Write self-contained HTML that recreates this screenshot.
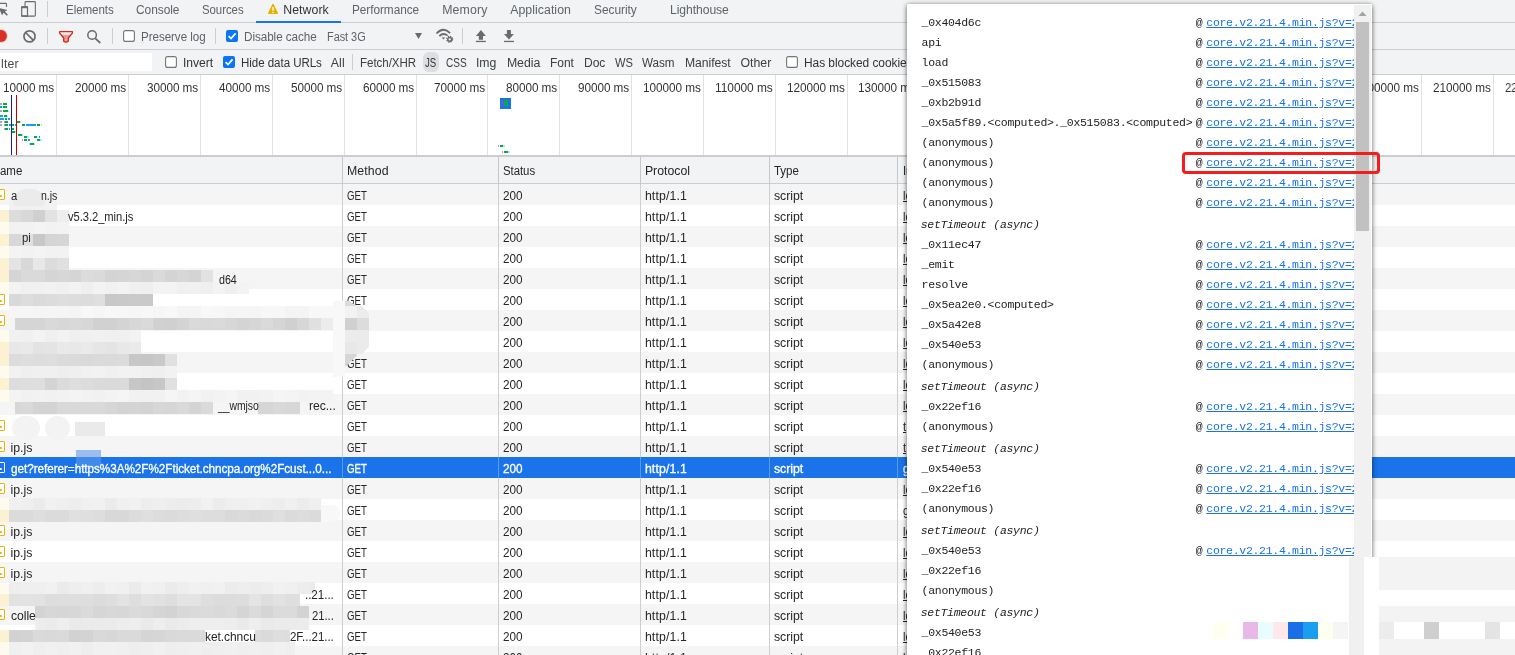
<!DOCTYPE html><html><head><meta charset="utf-8"><title>DevTools</title><style>
html,body{margin:0;padding:0}
body{width:1515px;height:655px;overflow:hidden;position:relative;background:#fff;font-family:'Liberation Sans',sans-serif;}
#r{position:absolute;left:0;top:0;width:1515px;height:655px;overflow:hidden}
#r div,#r span,#r svg{position:absolute;display:block}
#r span{white-space:pre;line-height:16px;}
#r .g{left:0;top:0;width:1515px;height:655px;will-change:transform;}
#r .pw{left:907px;top:4px;width:465px;height:660px;background:#fff;will-change:transform;}
#r .pi{left:-907px;top:-4px;width:1515px;height:655px}

</style></head><body><div id="r">
<!-- bg -->
<div style="left:0px;top:0px;width:1515px;height:22px;background:#f1f3f4;"></div>
<div style="left:0px;top:22px;width:1515px;height:1px;background:#cacdd1;"></div>
<div style="left:0px;top:23px;width:1515px;height:26px;background:#f1f3f4;"></div>
<div style="left:0px;top:49px;width:1515px;height:1px;background:#cacdd1;"></div>
<div style="left:0px;top:50px;width:1515px;height:24px;background:#f1f3f4;"></div>
<div style="left:0px;top:74px;width:1515px;height:1px;background:#cacdd1;"></div>
<div style="left:0px;top:75px;width:1515px;height:80px;background:#fff;"></div>
<div style="left:56px;top:75px;width:1px;height:80px;background:#e1e1e1;"></div>
<div style="left:128px;top:75px;width:1px;height:80px;background:#e1e1e1;"></div>
<div style="left:200px;top:75px;width:1px;height:80px;background:#e1e1e1;"></div>
<div style="left:272px;top:75px;width:1px;height:80px;background:#e1e1e1;"></div>
<div style="left:344px;top:75px;width:1px;height:80px;background:#e1e1e1;"></div>
<div style="left:416px;top:75px;width:1px;height:80px;background:#e1e1e1;"></div>
<div style="left:487px;top:75px;width:1px;height:80px;background:#e1e1e1;"></div>
<div style="left:559px;top:75px;width:1px;height:80px;background:#e1e1e1;"></div>
<div style="left:631px;top:75px;width:1px;height:80px;background:#e1e1e1;"></div>
<div style="left:703px;top:75px;width:1px;height:80px;background:#e1e1e1;"></div>
<div style="left:775px;top:75px;width:1px;height:80px;background:#e1e1e1;"></div>
<div style="left:847px;top:75px;width:1px;height:80px;background:#e1e1e1;"></div>
<div style="left:918px;top:75px;width:1px;height:80px;background:#e1e1e1;"></div>
<div style="left:990px;top:75px;width:1px;height:80px;background:#e1e1e1;"></div>
<div style="left:1062px;top:75px;width:1px;height:80px;background:#e1e1e1;"></div>
<div style="left:1134px;top:75px;width:1px;height:80px;background:#e1e1e1;"></div>
<div style="left:1206px;top:75px;width:1px;height:80px;background:#e1e1e1;"></div>
<div style="left:1277px;top:75px;width:1px;height:80px;background:#e1e1e1;"></div>
<div style="left:1349px;top:75px;width:1px;height:80px;background:#e1e1e1;"></div>
<div style="left:1421px;top:75px;width:1px;height:80px;background:#e1e1e1;"></div>
<div style="left:1493px;top:75px;width:1px;height:80px;background:#e1e1e1;"></div>
<div style="left:0px;top:155px;width:1515px;height:2px;background:#cbcdd1;"></div>
<div style="left:0px;top:157px;width:1515px;height:26px;background:#f1f3f4;"></div>
<div style="left:0px;top:183px;width:1515px;height:1px;background:#cacdd1;"></div>
<div style="left:0px;top:184px;width:1515px;height:21px;background:#f5f5f5;"></div>
<div style="left:0px;top:205px;width:1515px;height:21px;background:#fff;"></div>
<div style="left:0px;top:226px;width:1515px;height:21px;background:#f5f5f5;"></div>
<div style="left:0px;top:247px;width:1515px;height:21px;background:#fff;"></div>
<div style="left:0px;top:268px;width:1515px;height:21px;background:#f5f5f5;"></div>
<div style="left:0px;top:289px;width:1515px;height:21px;background:#fff;"></div>
<div style="left:0px;top:310px;width:1515px;height:21px;background:#f5f5f5;"></div>
<div style="left:0px;top:331px;width:1515px;height:21px;background:#fff;"></div>
<div style="left:0px;top:352px;width:1515px;height:21px;background:#f5f5f5;"></div>
<div style="left:0px;top:373px;width:1515px;height:21px;background:#fff;"></div>
<div style="left:0px;top:394px;width:1515px;height:21px;background:#f5f5f5;"></div>
<div style="left:0px;top:415px;width:1515px;height:21px;background:#fff;"></div>
<div style="left:0px;top:436px;width:1515px;height:21px;background:#f5f5f5;"></div>
<div style="left:0px;top:457px;width:1515px;height:21px;background:#1a73e8;"></div>
<div style="left:0px;top:478px;width:1515px;height:21px;background:#f5f5f5;"></div>
<div style="left:0px;top:499px;width:1515px;height:21px;background:#fff;"></div>
<div style="left:0px;top:520px;width:1515px;height:21px;background:#f5f5f5;"></div>
<div style="left:0px;top:541px;width:1515px;height:21px;background:#fff;"></div>
<div style="left:0px;top:562px;width:1515px;height:21px;background:#f5f5f5;"></div>
<div style="left:0px;top:583px;width:1515px;height:21px;background:#fff;"></div>
<div style="left:0px;top:604px;width:1515px;height:21px;background:#f5f5f5;"></div>
<div style="left:0px;top:625px;width:1515px;height:21px;background:#fff;"></div>
<div style="left:0px;top:646px;width:1515px;height:21px;background:#f5f5f5;"></div>
<div style="left:342px;top:157px;width:1px;height:27px;background:#c4c7cc;"></div>
<div style="left:342px;top:184px;width:1px;height:471px;background:#cbced4;"></div>
<div style="left:342px;top:457px;width:1px;height:21px;background:#5a9bef;"></div>
<div style="left:498px;top:157px;width:1px;height:27px;background:#c4c7cc;"></div>
<div style="left:498px;top:184px;width:1px;height:471px;background:#cbced4;"></div>
<div style="left:498px;top:457px;width:1px;height:21px;background:#5a9bef;"></div>
<div style="left:640px;top:157px;width:1px;height:27px;background:#c4c7cc;"></div>
<div style="left:640px;top:184px;width:1px;height:471px;background:#cbced4;"></div>
<div style="left:640px;top:457px;width:1px;height:21px;background:#5a9bef;"></div>
<div style="left:769px;top:157px;width:1px;height:27px;background:#c4c7cc;"></div>
<div style="left:769px;top:184px;width:1px;height:471px;background:#cbced4;"></div>
<div style="left:769px;top:457px;width:1px;height:21px;background:#5a9bef;"></div>
<div style="left:897px;top:157px;width:1px;height:27px;background:#c4c7cc;"></div>
<div style="left:897px;top:184px;width:1px;height:471px;background:#cbced4;"></div>
<div style="left:897px;top:457px;width:1px;height:21px;background:#5a9bef;"></div>
<div style="left:256px;top:21px;width:85px;height:2px;background:#1a73e8;"></div>
<div style="left:47px;top:1px;width:1px;height:16px;background:#cacdd1;"></div>
<svg style="left:0px;top:0px;" width="12" height="20" viewBox="0 0 12 20"><path d="M0 8.2 L7.4 9.9 L4.9 11.5 L7.9 14.8 L6.8 15.8 L3.7 12.7 L2 15.2 L0 10.5 Z" fill="#6b6b6b"/><path d="M0 3.4 H5.6 Q6.5 3.4 6.5 4.3 V7" fill="none" stroke="#6b6b6b" stroke-width="1.1"/></svg>
<svg style="left:20px;top:0px;" width="18" height="18" viewBox="0 0 18 18"><rect x="5.05" y="1.65" width="10.3" height="14.5" rx="0.9" fill="none" stroke="#6b6b6b" stroke-width="1.1"/><rect x="1.7" y="6.8" width="5.8" height="9.3" rx="0.6" fill="#f1f3f4" stroke="#6b6b6b" stroke-width="1.2"/><rect x="1.2" y="6.3" width="6.8" height="1.9" fill="#6b6b6b"/><rect x="1.2" y="15.3" width="6.8" height="1.4" fill="#6b6b6b"/></svg>
<svg style="left:267px;top:3px;" width="12" height="12" viewBox="0 0 12 12"><path d="M6 0.8 Q6.5 0.8 6.8 1.5 L10.9 10 Q11.2 11 10.3 11 H1.7 Q0.8 11 1.1 10 L5.2 1.5 Q5.5 0.8 6 0.8Z" fill="#eab000"/><rect x="5.25" y="4.1" width="1.5" height="3.8" fill="#fff"/><rect x="5.25" y="9.1" width="1.5" height="1" fill="#fff"/></svg>
<div style="left:47px;top:28px;width:1px;height:16px;background:#cacdd1;"></div>
<div style="left:112px;top:28px;width:1px;height:16px;background:#cacdd1;"></div>
<div style="left:215px;top:28px;width:1px;height:16px;background:#cacdd1;"></div>
<div style="left:462px;top:28px;width:1px;height:16px;background:#cacdd1;"></div>
<svg style="left:0px;top:27px;" width="10" height="18" viewBox="0 0 10 18"><circle cx="1.0" cy="9.0" r="6.9" fill="#d93025" opacity="0.22"/><circle cx="1.0" cy="9.0" r="5.9" fill="#d93025"/></svg>
<svg style="left:22px;top:29px;" width="16" height="16" viewBox="0 0 16 16"><circle cx="7.5" cy="7.4" r="5.55" fill="none" stroke="#6b6b6b" stroke-width="1.7"/><path d="M3.6 3.5 L11.4 11.3" stroke="#6b6b6b" stroke-width="1.7"/></svg>
<svg style="left:58px;top:30px;" width="17" height="14" viewBox="0 0 17 14"><path d="M3.4 4.7 H12.6 L10.3 8 V11.3 Q8 13 5.7 11.3 V8 Z" fill="#e89a94"/><path d="M1.65 1.7 H14.35 V3.2 L10.3 8 V11.3 Q8 13 5.7 11.3 V8 L1.65 3.2 Z" fill="none" stroke="#dc2418" stroke-width="1.3" stroke-linejoin="round"/></svg>
<svg style="left:86px;top:29px;" width="16" height="16" viewBox="0 0 16 16"><circle cx="6.1" cy="6.05" r="4.3" fill="none" stroke="#6a6a6a" stroke-width="1.5"/><path d="M9.3 9.4 L14.3 14.0" stroke="#6a6a6a" stroke-width="1.7"/></svg>
<svg style="left:123px;top:30px;" width="12" height="12" viewBox="0 0 12 12"><rect x="0.6" y="0.6" width="10.8" height="10.8" rx="2" fill="#fff" stroke="#767676" stroke-width="1.1"/></svg>
<svg style="left:226px;top:30px;" width="12" height="12" viewBox="0 0 12 12"><rect x="0" y="0" width="12" height="12" rx="2" fill="#0b75f8"/><path d="M2.6 6.2 L5 8.6 L9.6 3.4" fill="none" stroke="#fff" stroke-width="1.7"/></svg>
<svg style="left:414px;top:32px;" width="10" height="8" viewBox="0 0 10 8"><path d="M1 1 H8 L4.5 7 Z" fill="#6b6b6b"/></svg>
<svg style="left:435px;top:27px;" width="20" height="18" viewBox="0 0 20 18"><path d="M1.5 6.5 Q8.4 -0.8 15.1 6.1" fill="none" stroke="#6b6b6b" stroke-width="1.8"/><path d="M4.3 9.0 Q8.4 5.2 12.6 8.6" fill="none" stroke="#6b6b6b" stroke-width="1.8"/><path d="M6.7 10.4 H10.1 L8.4 12.6 Z" fill="#6b6b6b"/><circle cx="14.7" cy="12.3" r="3.9" fill="#f1f3f4"/><circle cx="14.7" cy="12.3" r="2.9" fill="none" stroke="#6b6b6b" stroke-width="1.3" stroke-dasharray="1.3 0.98"/><circle cx="14.7" cy="12.3" r="1.9" fill="none" stroke="#6b6b6b" stroke-width="1.5"/></svg>
<svg style="left:475px;top:29px;" width="12" height="14" viewBox="0 0 12 14"><path d="M5.95 0.9 L10.9 6.9 H8 V10.7 H3.8 V6.9 H0.9 Z" fill="#6b6b6b"/><rect x="0.9" y="11.8" width="10" height="1.3" fill="#6b6b6b"/></svg>
<svg style="left:503px;top:29px;" width="12" height="14" viewBox="0 0 12 14"><path d="M3.9 0.9 H7.9 V5.1 H10.9 L5.95 10.4 L1 5.1 H3.9 Z" fill="#6b6b6b"/><rect x="1" y="11.8" width="10" height="1.3" fill="#6b6b6b"/></svg>
<div style="left:0px;top:53px;width:152px;height:18px;background:#fff;"></div>
<div style="left:423px;top:52px;width:16px;height:19.7px;background:#dcdee2;border-radius:6px;"></div>
<div style="left:352px;top:54px;width:1px;height:16px;background:#cacdd1;"></div>
<svg style="left:165px;top:56px;" width="12" height="12" viewBox="0 0 12 12"><rect x="0.6" y="0.6" width="10.8" height="10.8" rx="2" fill="#fff" stroke="#767676" stroke-width="1.1"/></svg>
<svg style="left:223px;top:56px;" width="12" height="12" viewBox="0 0 12 12"><rect x="0" y="0" width="12" height="12" rx="2" fill="#0b75f8"/><path d="M2.6 6.2 L5 8.6 L9.6 3.4" fill="none" stroke="#fff" stroke-width="1.7"/></svg>
<svg style="left:786px;top:56px;" width="12" height="12" viewBox="0 0 12 12"><rect x="0.6" y="0.6" width="10.8" height="10.8" rx="2" fill="#fff" stroke="#767676" stroke-width="1.1"/></svg>
<div style="left:11px;top:95px;width:1px;height:60px;background:#1a1aa6;"></div>
<div style="left:16px;top:95px;width:1px;height:60px;background:#c80000;"></div>
<div style="left:0px;top:103.1px;width:2px;height:2.0px;background:#aaaaaa;"></div>
<div style="left:3px;top:103.1px;width:4px;height:2.0px;background:#00ac47;"></div>
<div style="left:0px;top:106.3px;width:2px;height:2.0px;background:#1a9fee;"></div>
<div style="left:3px;top:106.3px;width:4px;height:2.0px;background:#00ac47;"></div>
<div style="left:0px;top:109.5px;width:1.5px;height:2.0px;background:#aaaaaa;"></div>
<div style="left:3px;top:109.5px;width:5px;height:2.0px;background:#00ac47;"></div>
<div style="left:8px;top:109.5px;width:1px;height:2.0px;background:#b5e3f7;"></div>
<div style="left:0px;top:115px;width:3px;height:2px;background:#1a9fee;"></div>
<div style="left:4px;top:115px;width:2.5px;height:2px;background:#00ac47;"></div>
<div style="left:7px;top:115px;width:1px;height:2px;background:#b5e3f7;"></div>
<div style="left:0px;top:118.3px;width:4px;height:2.0px;background:#1a9fee;"></div>
<div style="left:5px;top:118.3px;width:2px;height:2.0px;background:#00ac47;"></div>
<div style="left:8px;top:118.3px;width:2px;height:2.0px;background:#1a9fee;"></div>
<div style="left:0px;top:121.4px;width:2px;height:2.0px;background:#aaaaaa;"></div>
<div style="left:3.5px;top:121.4px;width:0.5px;height:2.0px;background:#d88ae0;"></div>
<div style="left:5px;top:121.4px;width:3px;height:2.0px;background:#00ac47;"></div>
<div style="left:17px;top:121.4px;width:2.5px;height:2.0px;background:#00ac47;"></div>
<div style="left:19.5px;top:121.4px;width:1.0px;height:2.0px;background:#b5e3f7;"></div>
<div style="left:0px;top:124.4px;width:2px;height:2.0px;background:#aaaaaa;"></div>
<div style="left:3.5px;top:124.4px;width:0.5px;height:2.0px;background:#d88ae0;"></div>
<div style="left:5px;top:124.4px;width:3px;height:2.0px;background:#00ac47;"></div>
<div style="left:9px;top:124.4px;width:2px;height:2.0px;background:#1a9fee;"></div>
<div style="left:12px;top:124.4px;width:2px;height:2.0px;background:#00ac47;"></div>
<div style="left:15px;top:124.4px;width:1px;height:2.0px;background:#1a9fee;"></div>
<div style="left:22px;top:124.4px;width:3px;height:2.0px;background:#00ac47;"></div>
<div style="left:26px;top:124.4px;width:10px;height:2.0px;background:#1a9fee;"></div>
<div style="left:37px;top:124.4px;width:3px;height:2.0px;background:#00ac47;"></div>
<div style="left:41px;top:124.4px;width:1px;height:2.0px;background:#b5e3f7;"></div>
<div style="left:3.5px;top:127.5px;width:0.5px;height:2.0px;background:#d88ae0;"></div>
<div style="left:5px;top:127.5px;width:3px;height:2.0px;background:#00ac47;"></div>
<div style="left:9px;top:127.5px;width:1px;height:2.0px;background:#1a9fee;"></div>
<div style="left:12px;top:127.5px;width:2px;height:2.0px;background:#00ac47;"></div>
<div style="left:12px;top:130.5px;width:2.5px;height:2.0px;background:#00ac47;"></div>
<div style="left:14.5px;top:130.5px;width:1.0px;height:2.0px;background:#b5e3f7;"></div>
<div style="left:18px;top:133.5px;width:3.5px;height:2.0px;background:#00ac47;"></div>
<div style="left:21.5px;top:133.5px;width:1.0px;height:2.0px;background:#b5e3f7;"></div>
<div style="left:24px;top:136.3px;width:3px;height:2.0px;background:#00ac47;"></div>
<div style="left:27px;top:136.3px;width:1.5px;height:2.0px;background:#b5e3f7;"></div>
<div style="left:34px;top:136.3px;width:3px;height:2.0px;background:#00ac47;"></div>
<div style="left:38.5px;top:136.3px;width:1.5px;height:2.0px;background:#1a9fee;"></div>
<div style="left:22px;top:139.3px;width:0.6px;height:2.0px;background:#d88ae0;"></div>
<div style="left:24px;top:139.3px;width:3px;height:2.0px;background:#00ac47;"></div>
<div style="left:28px;top:139.3px;width:2px;height:2.0px;background:#1a9fee;"></div>
<div style="left:37px;top:139.3px;width:3px;height:2.0px;background:#00ac47;"></div>
<div style="left:40px;top:139.3px;width:1.5px;height:2.0px;background:#b5e3f7;"></div>
<div style="left:29px;top:142.5px;width:1px;height:2.0px;background:#b5e3f7;"></div>
<div style="left:30px;top:142.5px;width:4px;height:2.0px;background:#00ac47;"></div>
<div style="left:34px;top:142.5px;width:1px;height:2.0px;background:#b5e3f7;"></div>
<div style="left:500px;top:98.3px;width:11.2px;height:10.4px;background:#1a73e8;"></div>
<div style="left:503.5px;top:100px;width:4.5px;height:6.3px;background:#00ac47;"></div>
<div style="left:502.3px;top:100px;width:1.2px;height:6.3px;background:#c03ac8;"></div>
<div style="left:498px;top:145.3px;width:0.6px;height:2.0px;background:#d88ae0;"></div>
<div style="left:500px;top:145.3px;width:3px;height:2.0px;background:#00ac47;"></div>
<div style="left:503px;top:145.3px;width:2px;height:2.0px;background:#b5e3f7;"></div>
<div style="left:502px;top:151.3px;width:0.6px;height:2.0px;background:#d88ae0;"></div>
<div style="left:504px;top:151.3px;width:4px;height:2.0px;background:#00ac47;"></div>
<div style="left:508px;top:151.3px;width:2px;height:2.0px;background:#b5e3f7;"></div>
<div style="left:-6px;top:189.3px;width:8.6px;height:9.2px;border:1.3px solid #f0b400;border-radius:1px;background:#fff"></div>
<div style="left:0px;top:194.6px;width:1.5px;height:2.2px;background:#f0b400;border-radius:0 1px 1px 0;"></div>
<div style="left:-6px;top:273.3px;width:8.6px;height:9.2px;border:1.3px solid #f0b400;border-radius:1px;background:#fff"></div>
<div style="left:0px;top:278.6px;width:1.5px;height:2.2px;background:#f0b400;border-radius:0 1px 1px 0;"></div>
<div style="left:-6px;top:294.3px;width:8.6px;height:9.2px;border:1.3px solid #f0b400;border-radius:1px;background:#fff"></div>
<div style="left:0px;top:299.6px;width:1.5px;height:2.2px;background:#f0b400;border-radius:0 1px 1px 0;"></div>
<div style="left:-6px;top:315.3px;width:8.6px;height:9.2px;border:1.3px solid #f0b400;border-radius:1px;background:#fff"></div>
<div style="left:0px;top:320.6px;width:1.5px;height:2.2px;background:#f0b400;border-radius:0 1px 1px 0;"></div>
<div style="left:-6px;top:420.3px;width:8.6px;height:9.2px;border:1.3px solid #f0b400;border-radius:1px;background:#fff"></div>
<div style="left:0px;top:425.6px;width:1.5px;height:2.2px;background:#f0b400;border-radius:0 1px 1px 0;"></div>
<div style="left:-6px;top:441.3px;width:8.6px;height:9.2px;border:1.3px solid #f0b400;border-radius:1px;background:#fff"></div>
<div style="left:0px;top:446.6px;width:1.5px;height:2.2px;background:#f0b400;border-radius:0 1px 1px 0;"></div>
<div style="left:-6px;top:462.3px;width:8.6px;height:9.2px;border:1.3px solid #fff;border-radius:1px;background:none"></div>
<div style="left:0px;top:467.6px;width:1.5px;height:2.2px;background:#fff;border-radius:0 1px 1px 0;"></div>
<div style="left:-6px;top:483.3px;width:8.6px;height:9.2px;border:1.3px solid #f0b400;border-radius:1px;background:#fff"></div>
<div style="left:0px;top:488.6px;width:1.5px;height:2.2px;background:#f0b400;border-radius:0 1px 1px 0;"></div>
<div style="left:-6px;top:525.3px;width:8.6px;height:9.2px;border:1.3px solid #f0b400;border-radius:1px;background:#fff"></div>
<div style="left:0px;top:530.6px;width:1.5px;height:2.2px;background:#f0b400;border-radius:0 1px 1px 0;"></div>
<div style="left:-6px;top:546.3px;width:8.6px;height:9.2px;border:1.3px solid #f0b400;border-radius:1px;background:#fff"></div>
<div style="left:0px;top:551.6px;width:1.5px;height:2.2px;background:#f0b400;border-radius:0 1px 1px 0;"></div>
<div style="left:-6px;top:567.3px;width:8.6px;height:9.2px;border:1.3px solid #f0b400;border-radius:1px;background:#fff"></div>
<div style="left:0px;top:572.6px;width:1.5px;height:2.2px;background:#f0b400;border-radius:0 1px 1px 0;"></div>
<div style="left:-6px;top:609.3px;width:8.6px;height:9.2px;border:1.3px solid #f0b400;border-radius:1px;background:#fff"></div>
<div style="left:0px;top:614.6px;width:1.5px;height:2.2px;background:#f0b400;border-radius:0 1px 1px 0;"></div>
<!-- text -->
<div class="g">
<span style="left:65.5px;top:2.44px;font-size:12.3px;color:#5f6368;letter-spacing:-0.05px;transform:scaleX(0.9388);transform-origin:0 0;">Elements</span>
<span style="left:135.8px;top:2.44px;font-size:12.3px;color:#5f6368;letter-spacing:-0.05px;transform:scaleX(0.9704);transform-origin:0 0;">Console</span>
<span style="left:202.1px;top:2.44px;font-size:12.3px;color:#5f6368;letter-spacing:-0.05px;transform:scaleX(0.9281);transform-origin:0 0;">Sources</span>
<span style="left:283.3px;top:2.44px;font-size:12.3px;color:#333;letter-spacing:0.048px;">Network</span>
<span style="left:352.3px;top:2.44px;font-size:12.3px;color:#5f6368;letter-spacing:-0.05px;transform:scaleX(0.9599);transform-origin:0 0;">Performance</span>
<span style="left:442.2px;top:2.44px;font-size:12.3px;color:#5f6368;letter-spacing:0.156px;">Memory</span>
<span style="left:510.2px;top:2.44px;font-size:12.3px;color:#5f6368;letter-spacing:0.053px;">Application</span>
<span style="left:594.1px;top:2.44px;font-size:12.3px;color:#5f6368;letter-spacing:-0.05px;transform:scaleX(0.9689);transform-origin:0 0;">Security</span>
<span style="left:669.5px;top:2.44px;font-size:12.3px;color:#5f6368;letter-spacing:-0.05px;transform:scaleX(0.9846);transform-origin:0 0;">Lighthouse</span>
<span style="left:141.1px;top:29.24px;font-size:12.3px;color:#5f6368;letter-spacing:-0.05px;transform:scaleX(0.9431);transform-origin:0 0;">Preserve log</span>
<span style="left:243.7px;top:29.24px;font-size:12.3px;color:#5f6368;letter-spacing:-0.05px;transform:scaleX(0.9498);transform-origin:0 0;">Disable cache</span>
<span style="left:327.1px;top:29.24px;font-size:12.3px;color:#5f6368;letter-spacing:-0.05px;transform:scaleX(0.8907);transform-origin:0 0;">Fast 3G</span>
<span style="left:1.1px;top:56.44px;font-size:12.3px;color:#4a4a4a;letter-spacing:0.135px;">lter</span>
<span style="left:183.2px;top:54.74px;font-size:12.3px;color:#333;letter-spacing:-0.05px;transform:scaleX(0.9831);transform-origin:0 0;">Invert</span>
<span style="left:241.2px;top:54.74px;font-size:12.3px;color:#333;letter-spacing:-0.05px;transform:scaleX(0.9389);transform-origin:0 0;">Hide data URLs</span>
<span style="left:330.7px;top:54.74px;font-size:12.3px;color:#3c4043;letter-spacing:0.164px;">All</span>
<span style="left:359.7px;top:54.74px;font-size:12.3px;color:#3c4043;letter-spacing:-0.05px;transform:scaleX(0.9391);transform-origin:0 0;">Fetch/XHR</span>
<span style="left:445.9px;top:54.74px;font-size:12.3px;color:#3c4043;letter-spacing:-0.05px;transform:scaleX(0.8176);transform-origin:0 0;">CSS</span>
<span style="left:476.4px;top:54.74px;font-size:12.3px;color:#3c4043;letter-spacing:-0.05px;transform:scaleX(0.9951);transform-origin:0 0;">Img</span>
<span style="left:506.9px;top:54.74px;font-size:12.3px;color:#3c4043;letter-spacing:-0.025px;">Media</span>
<span style="left:550.2px;top:54.74px;font-size:12.3px;color:#3c4043;letter-spacing:-0.05px;transform:scaleX(0.9771);transform-origin:0 0;">Font</span>
<span style="left:584.0px;top:54.74px;font-size:12.3px;color:#3c4043;letter-spacing:-0.05px;transform:scaleX(0.9828);transform-origin:0 0;">Doc</span>
<span style="left:614.7px;top:54.74px;font-size:12.3px;color:#3c4043;letter-spacing:-0.05px;transform:scaleX(0.9058);transform-origin:0 0;">WS</span>
<span style="left:642.2px;top:54.74px;font-size:12.3px;color:#3c4043;letter-spacing:-0.05px;transform:scaleX(0.9492);transform-origin:0 0;">Wasm</span>
<span style="left:684.8px;top:54.74px;font-size:12.3px;color:#3c4043;letter-spacing:-0.05px;transform:scaleX(0.9906);transform-origin:0 0;">Manifest</span>
<span style="left:740.5px;top:54.74px;font-size:12.3px;color:#3c4043;letter-spacing:0.009px;">Other</span>
<span style="left:804.0px;top:54.74px;font-size:12.3px;color:#333;letter-spacing:-0.05px;transform:scaleX(0.9707);transform-origin:0 0;">Has blocked cookies</span>
<span style="left:425.2px;top:54.74px;font-size:12.3px;color:#333;letter-spacing:-0.05px;transform:scaleX(0.7827);transform-origin:0 0;">JS</span>
<span style="left:2.7px;top:80.24px;font-size:12.3px;color:#333;letter-spacing:-0.05px;transform:scaleX(0.9541);transform-origin:0 0;">10000 ms</span>
<span style="left:74.7px;top:80.24px;font-size:12.3px;color:#333;letter-spacing:-0.05px;transform:scaleX(0.9541);transform-origin:0 0;">20000 ms</span>
<span style="left:146.7px;top:80.24px;font-size:12.3px;color:#333;letter-spacing:-0.05px;transform:scaleX(0.9541);transform-origin:0 0;">30000 ms</span>
<span style="left:218.7px;top:80.24px;font-size:12.3px;color:#333;letter-spacing:-0.05px;transform:scaleX(0.9541);transform-origin:0 0;">40000 ms</span>
<span style="left:290.7px;top:80.24px;font-size:12.3px;color:#333;letter-spacing:-0.05px;transform:scaleX(0.9541);transform-origin:0 0;">50000 ms</span>
<span style="left:362.7px;top:80.24px;font-size:12.3px;color:#333;letter-spacing:-0.05px;transform:scaleX(0.9541);transform-origin:0 0;">60000 ms</span>
<span style="left:433.7px;top:80.24px;font-size:12.3px;color:#333;letter-spacing:-0.05px;transform:scaleX(0.9541);transform-origin:0 0;">70000 ms</span>
<span style="left:505.7px;top:80.24px;font-size:12.3px;color:#333;letter-spacing:-0.05px;transform:scaleX(0.9541);transform-origin:0 0;">80000 ms</span>
<span style="left:577.7px;top:80.24px;font-size:12.3px;color:#333;letter-spacing:-0.05px;transform:scaleX(0.9541);transform-origin:0 0;">90000 ms</span>
<span style="left:643.1px;top:80.24px;font-size:12.3px;color:#333;letter-spacing:-0.05px;transform:scaleX(0.9563);transform-origin:0 0;">100000 ms</span>
<span style="left:715.1px;top:80.24px;font-size:12.3px;color:#333;letter-spacing:-0.05px;transform:scaleX(0.9708);transform-origin:0 0;">110000 ms</span>
<span style="left:787.1px;top:80.24px;font-size:12.3px;color:#333;letter-spacing:-0.05px;transform:scaleX(0.9563);transform-origin:0 0;">120000 ms</span>
<span style="left:858.1px;top:80.24px;font-size:12.3px;color:#333;letter-spacing:-0.05px;transform:scaleX(0.9563);transform-origin:0 0;">130000 ms</span>
<span style="left:930.1px;top:80.24px;font-size:12.3px;color:#333;letter-spacing:-0.05px;transform:scaleX(0.9563);transform-origin:0 0;">140000 ms</span>
<span style="left:1002.1px;top:80.24px;font-size:12.3px;color:#333;letter-spacing:-0.05px;transform:scaleX(0.9563);transform-origin:0 0;">150000 ms</span>
<span style="left:1074.1px;top:80.24px;font-size:12.3px;color:#333;letter-spacing:-0.05px;transform:scaleX(0.9563);transform-origin:0 0;">160000 ms</span>
<span style="left:1146.1px;top:80.24px;font-size:12.3px;color:#333;letter-spacing:-0.05px;transform:scaleX(0.9563);transform-origin:0 0;">170000 ms</span>
<span style="left:1217.1px;top:80.24px;font-size:12.3px;color:#333;letter-spacing:-0.05px;transform:scaleX(0.9563);transform-origin:0 0;">180000 ms</span>
<span style="left:1289.1px;top:80.24px;font-size:12.3px;color:#333;letter-spacing:-0.05px;transform:scaleX(0.9563);transform-origin:0 0;">190000 ms</span>
<span style="left:1361.1px;top:80.24px;font-size:12.3px;color:#333;letter-spacing:-0.05px;transform:scaleX(0.9563);transform-origin:0 0;">200000 ms</span>
<span style="left:1433.1px;top:80.24px;font-size:12.3px;color:#333;letter-spacing:-0.05px;transform:scaleX(0.9563);transform-origin:0 0;">210000 ms</span>
<span style="left:1505px;top:80.24px;font-size:12.3px;color:#333;transform:scaleX(0.91);transform-origin:0 0;">220000 ms</span>
<span style="left:-0.5px;top:163.44px;font-size:12.3px;color:#262626;letter-spacing:-0.05px;transform:scaleX(0.9361);transform-origin:0 0;">ame</span>
<span style="left:347.0px;top:163.44px;font-size:12.3px;color:#262626;letter-spacing:0.114px;">Method</span>
<span style="left:503.3px;top:163.44px;font-size:12.3px;color:#262626;letter-spacing:-0.05px;transform:scaleX(0.9271);transform-origin:0 0;">Status</span>
<span style="left:644.9px;top:163.44px;font-size:12.3px;color:#262626;letter-spacing:-0.004px;">Protocol</span>
<span style="left:773.9px;top:163.44px;font-size:12.3px;color:#262626;letter-spacing:-0.05px;transform:scaleX(0.9388);transform-origin:0 0;">Type</span>
<span style="left:902.6px;top:163.44px;font-size:12.3px;color:#262626;transform:scaleX(0.91);transform-origin:0 0;">In</span>
<span style="left:347.0px;top:188.34px;font-size:12.3px;color:#262626;letter-spacing:-0.05px;transform:scaleX(0.7863);transform-origin:0 0;">GET</span>
<span style="left:502.9px;top:188.34px;font-size:12.3px;color:#262626;letter-spacing:-0.05px;transform:scaleX(0.9544);transform-origin:0 0;">200</span>
<span style="left:644.9px;top:188.34px;font-size:12.3px;color:#262626;letter-spacing:0.138px;">http/1.1</span>
<span style="left:773.9px;top:188.34px;font-size:12.3px;color:#262626;letter-spacing:0.002px;">script</span>
<span style="left:902.7px;top:188.34px;font-size:12.3px;color:#262626;transform:scaleX(0.91);transform-origin:0 0;text-decoration:underline;">lo</span>
<span style="left:347.0px;top:209.34px;font-size:12.3px;color:#262626;letter-spacing:-0.05px;transform:scaleX(0.7863);transform-origin:0 0;">GET</span>
<span style="left:502.9px;top:209.34px;font-size:12.3px;color:#262626;letter-spacing:-0.05px;transform:scaleX(0.9544);transform-origin:0 0;">200</span>
<span style="left:644.9px;top:209.34px;font-size:12.3px;color:#262626;letter-spacing:0.138px;">http/1.1</span>
<span style="left:773.9px;top:209.34px;font-size:12.3px;color:#262626;letter-spacing:0.002px;">script</span>
<span style="left:902.7px;top:209.34px;font-size:12.3px;color:#262626;transform:scaleX(0.91);transform-origin:0 0;text-decoration:underline;">lo</span>
<span style="left:347.0px;top:230.34px;font-size:12.3px;color:#262626;letter-spacing:-0.05px;transform:scaleX(0.7863);transform-origin:0 0;">GET</span>
<span style="left:502.9px;top:230.34px;font-size:12.3px;color:#262626;letter-spacing:-0.05px;transform:scaleX(0.9544);transform-origin:0 0;">200</span>
<span style="left:644.9px;top:230.34px;font-size:12.3px;color:#262626;letter-spacing:0.138px;">http/1.1</span>
<span style="left:773.9px;top:230.34px;font-size:12.3px;color:#262626;letter-spacing:0.002px;">script</span>
<span style="left:902.7px;top:230.34px;font-size:12.3px;color:#262626;transform:scaleX(0.91);transform-origin:0 0;text-decoration:underline;">lo</span>
<span style="left:347.0px;top:251.34px;font-size:12.3px;color:#262626;letter-spacing:-0.05px;transform:scaleX(0.7863);transform-origin:0 0;">GET</span>
<span style="left:502.9px;top:251.34px;font-size:12.3px;color:#262626;letter-spacing:-0.05px;transform:scaleX(0.9544);transform-origin:0 0;">200</span>
<span style="left:644.9px;top:251.34px;font-size:12.3px;color:#262626;letter-spacing:0.138px;">http/1.1</span>
<span style="left:773.9px;top:251.34px;font-size:12.3px;color:#262626;letter-spacing:0.002px;">script</span>
<span style="left:902.7px;top:251.34px;font-size:12.3px;color:#262626;transform:scaleX(0.91);transform-origin:0 0;text-decoration:underline;">lo</span>
<span style="left:347.0px;top:272.34px;font-size:12.3px;color:#262626;letter-spacing:-0.05px;transform:scaleX(0.7863);transform-origin:0 0;">GET</span>
<span style="left:502.9px;top:272.34px;font-size:12.3px;color:#262626;letter-spacing:-0.05px;transform:scaleX(0.9544);transform-origin:0 0;">200</span>
<span style="left:644.9px;top:272.34px;font-size:12.3px;color:#262626;letter-spacing:0.138px;">http/1.1</span>
<span style="left:773.9px;top:272.34px;font-size:12.3px;color:#262626;letter-spacing:0.002px;">script</span>
<span style="left:902.7px;top:272.34px;font-size:12.3px;color:#262626;transform:scaleX(0.91);transform-origin:0 0;text-decoration:underline;">lo</span>
<span style="left:347.0px;top:293.34px;font-size:12.3px;color:#262626;letter-spacing:-0.05px;transform:scaleX(0.7863);transform-origin:0 0;">GET</span>
<span style="left:502.9px;top:293.34px;font-size:12.3px;color:#262626;letter-spacing:-0.05px;transform:scaleX(0.9544);transform-origin:0 0;">200</span>
<span style="left:644.9px;top:293.34px;font-size:12.3px;color:#262626;letter-spacing:0.138px;">http/1.1</span>
<span style="left:773.9px;top:293.34px;font-size:12.3px;color:#262626;letter-spacing:0.002px;">script</span>
<span style="left:902.7px;top:293.34px;font-size:12.3px;color:#262626;transform:scaleX(0.91);transform-origin:0 0;text-decoration:underline;">lo</span>
<span style="left:502.9px;top:314.34px;font-size:12.3px;color:#262626;letter-spacing:-0.05px;transform:scaleX(0.9544);transform-origin:0 0;">200</span>
<span style="left:644.9px;top:314.34px;font-size:12.3px;color:#262626;letter-spacing:0.138px;">http/1.1</span>
<span style="left:773.9px;top:314.34px;font-size:12.3px;color:#262626;letter-spacing:0.002px;">script</span>
<span style="left:902.7px;top:314.34px;font-size:12.3px;color:#262626;transform:scaleX(0.91);transform-origin:0 0;text-decoration:underline;">lo</span>
<span style="left:502.9px;top:335.34px;font-size:12.3px;color:#262626;letter-spacing:-0.05px;transform:scaleX(0.9544);transform-origin:0 0;">200</span>
<span style="left:644.9px;top:335.34px;font-size:12.3px;color:#262626;letter-spacing:0.138px;">http/1.1</span>
<span style="left:773.9px;top:335.34px;font-size:12.3px;color:#262626;letter-spacing:0.002px;">script</span>
<span style="left:902.7px;top:335.34px;font-size:12.3px;color:#262626;transform:scaleX(0.91);transform-origin:0 0;text-decoration:underline;">lo</span>
<span style="left:347.0px;top:356.34px;font-size:12.3px;color:#262626;letter-spacing:-0.05px;transform:scaleX(0.7863);transform-origin:0 0;">GET</span>
<span style="left:502.9px;top:356.34px;font-size:12.3px;color:#262626;letter-spacing:-0.05px;transform:scaleX(0.9544);transform-origin:0 0;">200</span>
<span style="left:644.9px;top:356.34px;font-size:12.3px;color:#262626;letter-spacing:0.138px;">http/1.1</span>
<span style="left:773.9px;top:356.34px;font-size:12.3px;color:#262626;letter-spacing:0.002px;">script</span>
<span style="left:902.7px;top:356.34px;font-size:12.3px;color:#262626;transform:scaleX(0.91);transform-origin:0 0;text-decoration:underline;">lo</span>
<span style="left:347.0px;top:377.34px;font-size:12.3px;color:#262626;letter-spacing:-0.05px;transform:scaleX(0.7863);transform-origin:0 0;">GET</span>
<span style="left:502.9px;top:377.34px;font-size:12.3px;color:#262626;letter-spacing:-0.05px;transform:scaleX(0.9544);transform-origin:0 0;">200</span>
<span style="left:644.9px;top:377.34px;font-size:12.3px;color:#262626;letter-spacing:0.138px;">http/1.1</span>
<span style="left:773.9px;top:377.34px;font-size:12.3px;color:#262626;letter-spacing:0.002px;">script</span>
<span style="left:902.7px;top:377.34px;font-size:12.3px;color:#262626;transform:scaleX(0.91);transform-origin:0 0;text-decoration:underline;">lo</span>
<span style="left:347.0px;top:398.34px;font-size:12.3px;color:#262626;letter-spacing:-0.05px;transform:scaleX(0.7863);transform-origin:0 0;">GET</span>
<span style="left:502.9px;top:398.34px;font-size:12.3px;color:#262626;letter-spacing:-0.05px;transform:scaleX(0.9544);transform-origin:0 0;">200</span>
<span style="left:644.9px;top:398.34px;font-size:12.3px;color:#262626;letter-spacing:0.138px;">http/1.1</span>
<span style="left:773.9px;top:398.34px;font-size:12.3px;color:#262626;letter-spacing:0.002px;">script</span>
<span style="left:902.7px;top:398.34px;font-size:12.3px;color:#262626;transform:scaleX(0.91);transform-origin:0 0;text-decoration:underline;">lo</span>
<span style="left:347.0px;top:419.34px;font-size:12.3px;color:#262626;letter-spacing:-0.05px;transform:scaleX(0.7863);transform-origin:0 0;">GET</span>
<span style="left:502.9px;top:419.34px;font-size:12.3px;color:#262626;letter-spacing:-0.05px;transform:scaleX(0.9544);transform-origin:0 0;">200</span>
<span style="left:644.9px;top:419.34px;font-size:12.3px;color:#262626;letter-spacing:0.138px;">http/1.1</span>
<span style="left:773.9px;top:419.34px;font-size:12.3px;color:#262626;letter-spacing:0.002px;">script</span>
<span style="left:902.7px;top:419.34px;font-size:12.3px;color:#262626;transform:scaleX(0.91);transform-origin:0 0;text-decoration:underline;">t</span>
<span style="left:347.0px;top:440.34px;font-size:12.3px;color:#262626;letter-spacing:-0.05px;transform:scaleX(0.7863);transform-origin:0 0;">GET</span>
<span style="left:502.9px;top:440.34px;font-size:12.3px;color:#262626;letter-spacing:-0.05px;transform:scaleX(0.9544);transform-origin:0 0;">200</span>
<span style="left:644.9px;top:440.34px;font-size:12.3px;color:#262626;letter-spacing:0.138px;">http/1.1</span>
<span style="left:773.9px;top:440.34px;font-size:12.3px;color:#262626;letter-spacing:0.002px;">script</span>
<span style="left:902.7px;top:440.34px;font-size:12.3px;color:#262626;transform:scaleX(0.91);transform-origin:0 0;text-decoration:underline;">t</span>
<span style="left:10.5px;top:461.34px;font-size:12.3px;color:#fff;letter-spacing:-0.05px;transform:scaleX(0.9539);transform-origin:0 0;-webkit-text-stroke:0.3px #fff;">get?referer=https%3A%2F%2Fticket.chncpa.org%2Fcust...0...</span>
<span style="left:347.0px;top:461.34px;font-size:12.3px;color:#fff;letter-spacing:-0.05px;transform:scaleX(0.7863);transform-origin:0 0;-webkit-text-stroke:0.3px #fff;">GET</span>
<span style="left:502.9px;top:461.34px;font-size:12.3px;color:#fff;letter-spacing:-0.05px;transform:scaleX(0.9544);transform-origin:0 0;-webkit-text-stroke:0.3px #fff;">200</span>
<span style="left:644.9px;top:461.34px;font-size:12.3px;color:#fff;letter-spacing:0.138px;-webkit-text-stroke:0.3px #fff;">http/1.1</span>
<span style="left:773.9px;top:461.34px;font-size:12.3px;color:#fff;letter-spacing:0.002px;-webkit-text-stroke:0.3px #fff;">script</span>
<span style="left:902.7px;top:461.34px;font-size:12.3px;color:#fff;transform:scaleX(0.91);transform-origin:0 0;text-decoration:underline;-webkit-text-stroke:0.3px #fff;">g</span>
<span style="left:347.0px;top:482.34px;font-size:12.3px;color:#262626;letter-spacing:-0.05px;transform:scaleX(0.7863);transform-origin:0 0;">GET</span>
<span style="left:502.9px;top:482.34px;font-size:12.3px;color:#262626;letter-spacing:-0.05px;transform:scaleX(0.9544);transform-origin:0 0;">200</span>
<span style="left:644.9px;top:482.34px;font-size:12.3px;color:#262626;letter-spacing:0.138px;">http/1.1</span>
<span style="left:773.9px;top:482.34px;font-size:12.3px;color:#262626;letter-spacing:0.002px;">script</span>
<span style="left:902.7px;top:482.34px;font-size:12.3px;color:#262626;transform:scaleX(0.91);transform-origin:0 0;text-decoration:underline;">lo</span>
<span style="left:347.0px;top:503.34px;font-size:12.3px;color:#262626;letter-spacing:-0.05px;transform:scaleX(0.7863);transform-origin:0 0;">GET</span>
<span style="left:502.9px;top:503.34px;font-size:12.3px;color:#262626;letter-spacing:-0.05px;transform:scaleX(0.9544);transform-origin:0 0;">200</span>
<span style="left:644.9px;top:503.34px;font-size:12.3px;color:#262626;letter-spacing:0.138px;">http/1.1</span>
<span style="left:773.9px;top:503.34px;font-size:12.3px;color:#262626;letter-spacing:0.002px;">script</span>
<span style="left:902.7px;top:503.34px;font-size:12.3px;color:#262626;transform:scaleX(0.91);transform-origin:0 0;text-decoration:underline;">g</span>
<span style="left:347.0px;top:524.34px;font-size:12.3px;color:#262626;letter-spacing:-0.05px;transform:scaleX(0.7863);transform-origin:0 0;">GET</span>
<span style="left:502.9px;top:524.34px;font-size:12.3px;color:#262626;letter-spacing:-0.05px;transform:scaleX(0.9544);transform-origin:0 0;">200</span>
<span style="left:644.9px;top:524.34px;font-size:12.3px;color:#262626;letter-spacing:0.138px;">http/1.1</span>
<span style="left:773.9px;top:524.34px;font-size:12.3px;color:#262626;letter-spacing:0.002px;">script</span>
<span style="left:902.7px;top:524.34px;font-size:12.3px;color:#262626;transform:scaleX(0.91);transform-origin:0 0;text-decoration:underline;">lo</span>
<span style="left:347.0px;top:545.34px;font-size:12.3px;color:#262626;letter-spacing:-0.05px;transform:scaleX(0.7863);transform-origin:0 0;">GET</span>
<span style="left:502.9px;top:545.34px;font-size:12.3px;color:#262626;letter-spacing:-0.05px;transform:scaleX(0.9544);transform-origin:0 0;">200</span>
<span style="left:644.9px;top:545.34px;font-size:12.3px;color:#262626;letter-spacing:0.138px;">http/1.1</span>
<span style="left:773.9px;top:545.34px;font-size:12.3px;color:#262626;letter-spacing:0.002px;">script</span>
<span style="left:902.7px;top:545.34px;font-size:12.3px;color:#262626;transform:scaleX(0.91);transform-origin:0 0;text-decoration:underline;">lo</span>
<span style="left:347.0px;top:566.34px;font-size:12.3px;color:#262626;letter-spacing:-0.05px;transform:scaleX(0.7863);transform-origin:0 0;">GET</span>
<span style="left:502.9px;top:566.34px;font-size:12.3px;color:#262626;letter-spacing:-0.05px;transform:scaleX(0.9544);transform-origin:0 0;">200</span>
<span style="left:644.9px;top:566.34px;font-size:12.3px;color:#262626;letter-spacing:0.138px;">http/1.1</span>
<span style="left:773.9px;top:566.34px;font-size:12.3px;color:#262626;letter-spacing:0.002px;">script</span>
<span style="left:902.7px;top:566.34px;font-size:12.3px;color:#262626;transform:scaleX(0.91);transform-origin:0 0;text-decoration:underline;">lo</span>
<span style="left:347.0px;top:587.34px;font-size:12.3px;color:#262626;letter-spacing:-0.05px;transform:scaleX(0.7863);transform-origin:0 0;">GET</span>
<span style="left:502.9px;top:587.34px;font-size:12.3px;color:#262626;letter-spacing:-0.05px;transform:scaleX(0.9544);transform-origin:0 0;">200</span>
<span style="left:644.9px;top:587.34px;font-size:12.3px;color:#262626;letter-spacing:0.138px;">http/1.1</span>
<span style="left:773.9px;top:587.34px;font-size:12.3px;color:#262626;letter-spacing:0.002px;">script</span>
<span style="left:902.7px;top:587.34px;font-size:12.3px;color:#262626;transform:scaleX(0.91);transform-origin:0 0;text-decoration:underline;">lo</span>
<span style="left:347.0px;top:608.34px;font-size:12.3px;color:#262626;letter-spacing:-0.05px;transform:scaleX(0.7863);transform-origin:0 0;">GET</span>
<span style="left:502.9px;top:608.34px;font-size:12.3px;color:#262626;letter-spacing:-0.05px;transform:scaleX(0.9544);transform-origin:0 0;">200</span>
<span style="left:644.9px;top:608.34px;font-size:12.3px;color:#262626;letter-spacing:0.138px;">http/1.1</span>
<span style="left:773.9px;top:608.34px;font-size:12.3px;color:#262626;letter-spacing:0.002px;">script</span>
<span style="left:902.7px;top:608.34px;font-size:12.3px;color:#262626;transform:scaleX(0.91);transform-origin:0 0;text-decoration:underline;">lo</span>
<span style="left:347.0px;top:629.34px;font-size:12.3px;color:#262626;letter-spacing:-0.05px;transform:scaleX(0.7863);transform-origin:0 0;">GET</span>
<span style="left:502.9px;top:629.34px;font-size:12.3px;color:#262626;letter-spacing:-0.05px;transform:scaleX(0.9544);transform-origin:0 0;">200</span>
<span style="left:644.9px;top:629.34px;font-size:12.3px;color:#262626;letter-spacing:0.138px;">http/1.1</span>
<span style="left:773.9px;top:629.34px;font-size:12.3px;color:#262626;letter-spacing:0.002px;">script</span>
<span style="left:902.7px;top:629.34px;font-size:12.3px;color:#262626;transform:scaleX(0.91);transform-origin:0 0;text-decoration:underline;">lo</span>
<span style="left:347.0px;top:650.34px;font-size:12.3px;color:#262626;letter-spacing:-0.05px;transform:scaleX(0.7863);transform-origin:0 0;">GET</span>
<span style="left:502.9px;top:650.34px;font-size:12.3px;color:#262626;letter-spacing:-0.05px;transform:scaleX(0.9544);transform-origin:0 0;">200</span>
<span style="left:644.9px;top:650.34px;font-size:12.3px;color:#262626;letter-spacing:0.138px;">http/1.1</span>
<span style="left:773.9px;top:650.34px;font-size:12.3px;color:#262626;letter-spacing:0.002px;">script</span>
<span style="left:902.7px;top:650.34px;font-size:12.3px;color:#262626;transform:scaleX(0.91);transform-origin:0 0;text-decoration:underline;">lo</span>
</div>
<!-- mosaic -->
<div style="left:9px;top:198px;width:12px;height:12px;background:#f1f1f1;"></div>
<div style="left:21px;top:198px;width:12px;height:12px;background:#f0f0f0;"></div>
<div style="left:33px;top:198px;width:12px;height:12px;background:#f1f1f1;"></div>
<div style="left:45px;top:198px;width:12px;height:12px;background:#f2f2f2;"></div>
<div style="left:9px;top:210px;width:12px;height:12px;background:#dcdcdc;"></div>
<div style="left:21px;top:210px;width:12px;height:12px;background:#d8d8d8;"></div>
<div style="left:33px;top:210px;width:12px;height:12px;background:#d0d0d0;"></div>
<div style="left:45px;top:210px;width:12px;height:12px;background:#e2e2e2;"></div>
<div style="left:57px;top:210px;width:12px;height:12px;background:#eeeeee;"></div>
<div style="left:0px;top:210px;width:9px;height:12px;background:#fcf1d2;"></div>
<div style="left:9px;top:222px;width:12px;height:12px;background:#f2f2f2;"></div>
<div style="left:21px;top:222px;width:12px;height:12px;background:#f2f2f2;"></div>
<div style="left:33px;top:222px;width:12px;height:12px;background:#f4f4f4;"></div>
<div style="left:45px;top:222px;width:12px;height:12px;background:#f2f2f2;"></div>
<div style="left:57px;top:222px;width:12px;height:12px;background:#f3f3f3;"></div>
<div style="left:0px;top:222px;width:9px;height:12px;background:#fffaee;"></div>
<div style="left:9px;top:234px;width:12px;height:12px;background:#d8d8d8;"></div>
<div style="left:21px;top:234px;width:12px;height:12px;background:#e0e0e0;"></div>
<div style="left:33px;top:234px;width:12px;height:12px;background:#c8c8c8;"></div>
<div style="left:45px;top:234px;width:12px;height:12px;background:#d4d4d4;"></div>
<div style="left:57px;top:234px;width:12px;height:12px;background:#d6d6d6;"></div>
<div style="left:0px;top:234px;width:9px;height:12px;background:#fcf1d2;"></div>
<div style="left:9px;top:246px;width:12px;height:12px;background:#f4f4f4;"></div>
<div style="left:21px;top:246px;width:12px;height:12px;background:#f2f2f2;"></div>
<div style="left:33px;top:246px;width:12px;height:12px;background:#f4f4f4;"></div>
<div style="left:45px;top:246px;width:12px;height:12px;background:#f2f2f2;"></div>
<div style="left:57px;top:246px;width:12px;height:12px;background:#f2f2f2;"></div>
<div style="left:0px;top:246px;width:9px;height:12px;background:#fffaee;"></div>
<div style="left:9px;top:258px;width:12px;height:12px;background:#e4e4e4;"></div>
<div style="left:21px;top:258px;width:12px;height:12px;background:#d8d8d8;"></div>
<div style="left:33px;top:258px;width:12px;height:12px;background:#e8e8e8;"></div>
<div style="left:45px;top:258px;width:12px;height:12px;background:#dcdcdc;"></div>
<div style="left:57px;top:258px;width:12px;height:12px;background:#e0e0e0;"></div>
<div style="left:0px;top:258px;width:9px;height:12px;background:#fcf1d2;"></div>
<div style="left:9px;top:270px;width:12px;height:12px;background:#d5d5d5;"></div>
<div style="left:21px;top:270px;width:12px;height:12px;background:#dadada;"></div>
<div style="left:33px;top:270px;width:12px;height:12px;background:#dadada;"></div>
<div style="left:45px;top:270px;width:12px;height:12px;background:#d5d5d5;"></div>
<div style="left:57px;top:270px;width:12px;height:12px;background:#d7d7d7;"></div>
<div style="left:69px;top:270px;width:12px;height:12px;background:#d5d5d5;"></div>
<div style="left:81px;top:270px;width:12px;height:12px;background:#dcdcdc;"></div>
<div style="left:93px;top:270px;width:12px;height:12px;background:#dadada;"></div>
<div style="left:105px;top:270px;width:12px;height:12px;background:#d4d4d4;"></div>
<div style="left:117px;top:270px;width:12px;height:12px;background:#d5d5d5;"></div>
<div style="left:129px;top:270px;width:12px;height:12px;background:#d7d7d7;"></div>
<div style="left:141px;top:270px;width:12px;height:12px;background:#d4d4d4;"></div>
<div style="left:153px;top:270px;width:12px;height:12px;background:#dadada;"></div>
<div style="left:165px;top:270px;width:12px;height:12px;background:#d4d4d4;"></div>
<div style="left:177px;top:270px;width:12px;height:12px;background:#d7d7d7;"></div>
<div style="left:189px;top:270px;width:12px;height:12px;background:#d4d4d4;"></div>
<div style="left:201px;top:270px;width:12px;height:12px;background:#e2e2e2;"></div>
<div style="left:0px;top:270px;width:9px;height:12px;background:#fcf1d2;"></div>
<div style="left:9px;top:282px;width:12px;height:12px;background:#f3f3f3;"></div>
<div style="left:21px;top:282px;width:12px;height:12px;background:#f0f0f0;"></div>
<div style="left:33px;top:282px;width:12px;height:12px;background:#f1f1f1;"></div>
<div style="left:45px;top:282px;width:12px;height:12px;background:#f2f2f2;"></div>
<div style="left:57px;top:282px;width:12px;height:12px;background:#f0f0f0;"></div>
<div style="left:69px;top:282px;width:12px;height:12px;background:#f3f3f3;"></div>
<div style="left:81px;top:282px;width:12px;height:12px;background:#efefef;"></div>
<div style="left:93px;top:282px;width:12px;height:12px;background:#f3f3f3;"></div>
<div style="left:105px;top:282px;width:12px;height:12px;background:#f1f1f1;"></div>
<div style="left:117px;top:282px;width:12px;height:12px;background:#f3f3f3;"></div>
<div style="left:129px;top:282px;width:12px;height:12px;background:#f0f0f0;"></div>
<div style="left:141px;top:282px;width:12px;height:12px;background:#efefef;"></div>
<div style="left:153px;top:282px;width:12px;height:12px;background:#f3f3f3;"></div>
<div style="left:165px;top:282px;width:12px;height:12px;background:#f3f3f3;"></div>
<div style="left:177px;top:282px;width:12px;height:12px;background:#f0f0f0;"></div>
<div style="left:189px;top:282px;width:12px;height:12px;background:#f1f1f1;"></div>
<div style="left:201px;top:282px;width:12px;height:12px;background:#efefef;"></div>
<div style="left:213px;top:282px;width:12px;height:12px;background:#f3f3f3;"></div>
<div style="left:225px;top:282px;width:12px;height:12px;background:#efefef;"></div>
<div style="left:237px;top:282px;width:12px;height:12px;background:#f3f3f3;"></div>
<div style="left:0px;top:282px;width:9px;height:12px;background:#fffaee;"></div>
<div style="left:9px;top:294px;width:12px;height:12px;background:#d9d9d9;"></div>
<div style="left:21px;top:294px;width:12px;height:12px;background:#dddddd;"></div>
<div style="left:33px;top:294px;width:12px;height:12px;background:#dadada;"></div>
<div style="left:45px;top:294px;width:12px;height:12px;background:#dcdcdc;"></div>
<div style="left:57px;top:294px;width:12px;height:12px;background:#dedede;"></div>
<div style="left:69px;top:294px;width:12px;height:12px;background:#dddddd;"></div>
<div style="left:81px;top:294px;width:12px;height:12px;background:#dcdcdc;"></div>
<div style="left:93px;top:294px;width:12px;height:12px;background:#dfdfdf;"></div>
<div style="left:105px;top:294px;width:12px;height:12px;background:#c8c8c8;"></div>
<div style="left:117px;top:294px;width:12px;height:12px;background:#c9c9c9;"></div>
<div style="left:129px;top:294px;width:12px;height:12px;background:#cacaca;"></div>
<div style="left:141px;top:294px;width:12px;height:12px;background:#c9c9c9;"></div>
<div style="left:9px;top:306px;width:12px;height:12px;background:#f6f6f6;"></div>
<div style="left:21px;top:306px;width:12px;height:12px;background:#f6f6f6;"></div>
<div style="left:33px;top:306px;width:12px;height:12px;background:#f5f5f5;"></div>
<div style="left:45px;top:306px;width:12px;height:12px;background:#f5f5f5;"></div>
<div style="left:57px;top:306px;width:12px;height:12px;background:#f5f5f5;"></div>
<div style="left:69px;top:306px;width:12px;height:12px;background:#f4f4f4;"></div>
<div style="left:81px;top:306px;width:12px;height:12px;background:#f8f8f8;"></div>
<div style="left:93px;top:306px;width:12px;height:12px;background:#f6f6f6;"></div>
<div style="left:105px;top:306px;width:12px;height:12px;background:#f8f8f8;"></div>
<div style="left:117px;top:306px;width:12px;height:12px;background:#f7f7f7;"></div>
<div style="left:129px;top:306px;width:12px;height:12px;background:#f6f6f6;"></div>
<div style="left:141px;top:306px;width:12px;height:12px;background:#f7f7f7;"></div>
<div style="left:153px;top:306px;width:12px;height:12px;background:#f6f6f6;"></div>
<div style="left:165px;top:306px;width:12px;height:12px;background:#f8f8f8;"></div>
<div style="left:177px;top:306px;width:12px;height:12px;background:#f4f4f4;"></div>
<div style="left:189px;top:306px;width:12px;height:12px;background:#f4f4f4;"></div>
<div style="left:201px;top:306px;width:12px;height:12px;background:#f8f8f8;"></div>
<div style="left:213px;top:306px;width:12px;height:12px;background:#f7f7f7;"></div>
<div style="left:225px;top:306px;width:12px;height:12px;background:#f5f5f5;"></div>
<div style="left:237px;top:306px;width:12px;height:12px;background:#f6f6f6;"></div>
<div style="left:249px;top:306px;width:12px;height:12px;background:#f5f5f5;"></div>
<div style="left:261px;top:306px;width:12px;height:12px;background:#f7f7f7;"></div>
<div style="left:273px;top:306px;width:12px;height:12px;background:#f7f7f7;"></div>
<div style="left:285px;top:306px;width:12px;height:12px;background:#f4f4f4;"></div>
<div style="left:297px;top:306px;width:12px;height:12px;background:#f4f4f4;"></div>
<div style="left:309px;top:306px;width:12px;height:12px;background:#f8f8f8;"></div>
<div style="left:321px;top:306px;width:12px;height:12px;background:#f8f8f8;"></div>
<div style="left:15px;top:318px;width:6px;height:12px;background:#d5d5d5;"></div>
<div style="left:21px;top:318px;width:12px;height:12px;background:#d5d5d5;"></div>
<div style="left:33px;top:318px;width:12px;height:12px;background:#d5d5d5;"></div>
<div style="left:45px;top:318px;width:12px;height:12px;background:#d9d9d9;"></div>
<div style="left:57px;top:318px;width:12px;height:12px;background:#d7d7d7;"></div>
<div style="left:69px;top:318px;width:12px;height:12px;background:#d9d9d9;"></div>
<div style="left:81px;top:318px;width:12px;height:12px;background:#d7d7d7;"></div>
<div style="left:93px;top:318px;width:12px;height:12px;background:#d1d1d1;"></div>
<div style="left:105px;top:318px;width:12px;height:12px;background:#d1d1d1;"></div>
<div style="left:117px;top:318px;width:12px;height:12px;background:#d4d4d4;"></div>
<div style="left:129px;top:318px;width:12px;height:12px;background:#d7d7d7;"></div>
<div style="left:141px;top:318px;width:12px;height:12px;background:#dadada;"></div>
<div style="left:153px;top:318px;width:12px;height:12px;background:#d1d1d1;"></div>
<div style="left:165px;top:318px;width:12px;height:12px;background:#d0d0d0;"></div>
<div style="left:177px;top:318px;width:12px;height:12px;background:#d4d4d4;"></div>
<div style="left:189px;top:318px;width:12px;height:12px;background:#dadada;"></div>
<div style="left:201px;top:318px;width:12px;height:12px;background:#d9d9d9;"></div>
<div style="left:213px;top:318px;width:12px;height:12px;background:#dadada;"></div>
<div style="left:225px;top:318px;width:12px;height:12px;background:#d7d7d7;"></div>
<div style="left:237px;top:318px;width:12px;height:12px;background:#d4d4d4;"></div>
<div style="left:249px;top:318px;width:12px;height:12px;background:#d6d6d6;"></div>
<div style="left:261px;top:318px;width:12px;height:12px;background:#dadada;"></div>
<div style="left:273px;top:318px;width:12px;height:12px;background:#d5d5d5;"></div>
<div style="left:285px;top:318px;width:12px;height:12px;background:#d0d0d0;"></div>
<div style="left:297px;top:318px;width:12px;height:12px;background:#d7d7d7;"></div>
<div style="left:309px;top:318px;width:12px;height:12px;background:#e0e0e0;"></div>
<div style="left:321px;top:318px;width:12px;height:12px;background:#ececec;"></div>
<div style="left:333px;top:301px;width:12px;height:76px;background:#f8f8f8;"></div>
<div style="left:345px;top:301px;width:12px;height:5px;background:#dadada;clip-path:polygon(0 0,30% 0,100% 100%,0 100%);"></div>
<div style="left:345px;top:306px;width:12px;height:12px;background:#f2f2f2;"></div>
<div style="left:345px;top:318px;width:12px;height:12px;background:#d0d0d0;"></div>
<div style="left:345px;top:330px;width:12px;height:12px;background:#ececec;"></div>
<div style="left:345px;top:342px;width:12px;height:12px;background:#e8e8e8;"></div>
<div style="left:345px;top:354px;width:12px;height:12px;background:#d6d6d6;clip-path:polygon(0 0,100% 0,100% 10%,10% 100%,0 100%);"></div>
<div style="left:357px;top:306px;width:12px;height:12px;background:#ececec;clip-path:polygon(0 0,40% 0,100% 60%,100% 100%,0 100%);"></div>
<div style="left:357px;top:318px;width:12px;height:12px;background:#dcdcdc;"></div>
<div style="left:357px;top:330px;width:12px;height:12px;background:#ebebeb;"></div>
<div style="left:357px;top:342px;width:12px;height:12px;background:#ebebeb;clip-path:polygon(0 0,100% 0,100% 40%,40% 100%,0 100%);"></div>
<div style="left:9px;top:330px;width:12px;height:12px;background:#f1f1f1;"></div>
<div style="left:21px;top:330px;width:12px;height:12px;background:#f0f0f0;"></div>
<div style="left:33px;top:330px;width:12px;height:12px;background:#f3f3f3;"></div>
<div style="left:45px;top:330px;width:12px;height:12px;background:#efefef;"></div>
<div style="left:57px;top:330px;width:12px;height:12px;background:#f2f2f2;"></div>
<div style="left:69px;top:330px;width:12px;height:12px;background:#efefef;"></div>
<div style="left:81px;top:330px;width:12px;height:12px;background:#f0f0f0;"></div>
<div style="left:93px;top:330px;width:12px;height:12px;background:#f1f1f1;"></div>
<div style="left:105px;top:330px;width:12px;height:12px;background:#f0f0f0;"></div>
<div style="left:117px;top:330px;width:12px;height:12px;background:#f0f0f0;"></div>
<div style="left:129px;top:330px;width:12px;height:12px;background:#f2f2f2;"></div>
<div style="left:0px;top:330px;width:9px;height:12px;background:#fffaee;"></div>
<div style="left:9px;top:342px;width:12px;height:12px;background:#e8e8e8;"></div>
<div style="left:21px;top:342px;width:12px;height:12px;background:#e9e9e9;"></div>
<div style="left:33px;top:342px;width:12px;height:12px;background:#e3e3e3;"></div>
<div style="left:45px;top:342px;width:12px;height:12px;background:#e4e4e4;"></div>
<div style="left:57px;top:342px;width:12px;height:12px;background:#e9e9e9;"></div>
<div style="left:69px;top:342px;width:12px;height:12px;background:#e8e8e8;"></div>
<div style="left:81px;top:342px;width:12px;height:12px;background:#eaeaea;"></div>
<div style="left:93px;top:342px;width:12px;height:12px;background:#e6e6e6;"></div>
<div style="left:105px;top:342px;width:12px;height:12px;background:#e4e4e4;"></div>
<div style="left:117px;top:342px;width:12px;height:12px;background:#e8e8e8;"></div>
<div style="left:129px;top:342px;width:12px;height:12px;background:#eaeaea;"></div>
<div style="left:0px;top:342px;width:9px;height:12px;background:#fcf1d2;"></div>
<div style="left:9px;top:354px;width:12px;height:12px;background:#dcdcdc;"></div>
<div style="left:21px;top:354px;width:12px;height:12px;background:#dedede;"></div>
<div style="left:33px;top:354px;width:12px;height:12px;background:#dddddd;"></div>
<div style="left:45px;top:354px;width:12px;height:12px;background:#dedede;"></div>
<div style="left:57px;top:354px;width:12px;height:12px;background:#dbdbdb;"></div>
<div style="left:69px;top:354px;width:12px;height:12px;background:#dadada;"></div>
<div style="left:81px;top:354px;width:12px;height:12px;background:#d9d9d9;"></div>
<div style="left:93px;top:354px;width:12px;height:12px;background:#dadada;"></div>
<div style="left:105px;top:354px;width:12px;height:12px;background:#dadada;"></div>
<div style="left:117px;top:354px;width:12px;height:12px;background:#dbdbdb;"></div>
<div style="left:129px;top:354px;width:12px;height:12px;background:#c7c7c7;"></div>
<div style="left:141px;top:354px;width:12px;height:12px;background:#c6c6c6;"></div>
<div style="left:153px;top:354px;width:12px;height:12px;background:#c9c9c9;"></div>
<div style="left:165px;top:354px;width:12px;height:12px;background:#e0e0e0;"></div>
<div style="left:0px;top:354px;width:9px;height:12px;background:#fcf1d2;"></div>
<div style="left:9px;top:366px;width:12px;height:12px;background:#f2f2f2;"></div>
<div style="left:21px;top:366px;width:12px;height:12px;background:#efefef;"></div>
<div style="left:33px;top:366px;width:12px;height:12px;background:#f0f0f0;"></div>
<div style="left:45px;top:366px;width:12px;height:12px;background:#f0f0f0;"></div>
<div style="left:57px;top:366px;width:12px;height:12px;background:#eeeeee;"></div>
<div style="left:69px;top:366px;width:12px;height:12px;background:#efefef;"></div>
<div style="left:81px;top:366px;width:12px;height:12px;background:#f1f1f1;"></div>
<div style="left:93px;top:366px;width:12px;height:12px;background:#f2f2f2;"></div>
<div style="left:105px;top:366px;width:12px;height:12px;background:#f0f0f0;"></div>
<div style="left:117px;top:366px;width:12px;height:12px;background:#f2f2f2;"></div>
<div style="left:129px;top:366px;width:12px;height:12px;background:#f2f2f2;"></div>
<div style="left:141px;top:366px;width:12px;height:12px;background:#f0f0f0;"></div>
<div style="left:153px;top:366px;width:12px;height:12px;background:#efefef;"></div>
<div style="left:165px;top:366px;width:12px;height:12px;background:#f2f2f2;"></div>
<div style="left:0px;top:366px;width:9px;height:12px;background:#fffaee;"></div>
<div style="left:9px;top:378px;width:12px;height:12px;background:#dddddd;"></div>
<div style="left:21px;top:378px;width:12px;height:12px;background:#dedede;"></div>
<div style="left:33px;top:378px;width:12px;height:12px;background:#dedede;"></div>
<div style="left:45px;top:378px;width:12px;height:12px;background:#d4d4d4;"></div>
<div style="left:57px;top:378px;width:12px;height:12px;background:#dbdbdb;"></div>
<div style="left:69px;top:378px;width:12px;height:12px;background:#dedede;"></div>
<div style="left:81px;top:378px;width:12px;height:12px;background:#dcdcdc;"></div>
<div style="left:93px;top:378px;width:12px;height:12px;background:#dadada;"></div>
<div style="left:105px;top:378px;width:12px;height:12px;background:#dadada;"></div>
<div style="left:117px;top:378px;width:12px;height:12px;background:#dadada;"></div>
<div style="left:129px;top:378px;width:12px;height:12px;background:#c7c7c7;"></div>
<div style="left:141px;top:378px;width:12px;height:12px;background:#c4c4c4;"></div>
<div style="left:153px;top:378px;width:12px;height:12px;background:#c7c7c7;"></div>
<div style="left:165px;top:378px;width:12px;height:12px;background:#e0e0e0;"></div>
<div style="left:0px;top:378px;width:9px;height:12px;background:#fcf1d2;"></div>
<div style="left:9px;top:390px;width:12px;height:12px;background:#f4f4f4;"></div>
<div style="left:21px;top:390px;width:12px;height:12px;background:#f1f1f1;"></div>
<div style="left:33px;top:390px;width:12px;height:12px;background:#f2f2f2;"></div>
<div style="left:45px;top:390px;width:12px;height:12px;background:#f1f1f1;"></div>
<div style="left:57px;top:390px;width:12px;height:12px;background:#f2f2f2;"></div>
<div style="left:69px;top:390px;width:12px;height:12px;background:#f4f4f4;"></div>
<div style="left:81px;top:390px;width:12px;height:12px;background:#f2f2f2;"></div>
<div style="left:93px;top:390px;width:12px;height:12px;background:#f1f1f1;"></div>
<div style="left:105px;top:390px;width:12px;height:12px;background:#f3f3f3;"></div>
<div style="left:117px;top:390px;width:12px;height:12px;background:#f5f5f5;"></div>
<div style="left:129px;top:390px;width:12px;height:12px;background:#f1f1f1;"></div>
<div style="left:141px;top:390px;width:12px;height:12px;background:#f1f1f1;"></div>
<div style="left:153px;top:390px;width:12px;height:12px;background:#f1f1f1;"></div>
<div style="left:165px;top:390px;width:12px;height:12px;background:#f5f5f5;"></div>
<div style="left:177px;top:390px;width:12px;height:12px;background:#f2f2f2;"></div>
<div style="left:189px;top:390px;width:12px;height:12px;background:#f5f5f5;"></div>
<div style="left:201px;top:390px;width:12px;height:12px;background:#f1f1f1;"></div>
<div style="left:213px;top:390px;width:12px;height:12px;background:#f3f3f3;"></div>
<div style="left:225px;top:390px;width:12px;height:12px;background:#f5f5f5;"></div>
<div style="left:237px;top:390px;width:12px;height:12px;background:#f1f1f1;"></div>
<div style="left:249px;top:390px;width:12px;height:12px;background:#f1f1f1;"></div>
<div style="left:261px;top:390px;width:12px;height:12px;background:#f2f2f2;"></div>
<div style="left:273px;top:390px;width:12px;height:12px;background:#f5f5f5;"></div>
<div style="left:285px;top:390px;width:12px;height:12px;background:#f4f4f4;"></div>
<div style="left:297px;top:390px;width:12px;height:12px;background:#f2f2f2;"></div>
<div style="left:309px;top:390px;width:12px;height:12px;background:#f3f3f3;"></div>
<div style="left:321px;top:390px;width:12px;height:12px;background:#f3f3f3;"></div>
<div style="left:0px;top:390px;width:9px;height:12px;background:#fffaee;"></div>
<div style="left:15px;top:402px;width:6px;height:12px;background:#d7d7d7;"></div>
<div style="left:21px;top:402px;width:12px;height:12px;background:#d9d9d9;"></div>
<div style="left:33px;top:402px;width:12px;height:12px;background:#d3d3d3;"></div>
<div style="left:45px;top:402px;width:12px;height:12px;background:#d3d3d3;"></div>
<div style="left:57px;top:402px;width:12px;height:12px;background:#d9d9d9;"></div>
<div style="left:69px;top:402px;width:12px;height:12px;background:#d9d9d9;"></div>
<div style="left:81px;top:402px;width:12px;height:12px;background:#d9d9d9;"></div>
<div style="left:93px;top:402px;width:12px;height:12px;background:#d9d9d9;"></div>
<div style="left:105px;top:402px;width:12px;height:12px;background:#d6d6d6;"></div>
<div style="left:117px;top:402px;width:12px;height:12px;background:#d3d3d3;"></div>
<div style="left:129px;top:402px;width:12px;height:12px;background:#d4d4d4;"></div>
<div style="left:141px;top:402px;width:12px;height:12px;background:#d3d3d3;"></div>
<div style="left:153px;top:402px;width:12px;height:12px;background:#d7d7d7;"></div>
<div style="left:165px;top:402px;width:12px;height:12px;background:#d6d6d6;"></div>
<div style="left:177px;top:402px;width:12px;height:12px;background:#d9d9d9;"></div>
<div style="left:189px;top:402px;width:12px;height:12px;background:#d4d4d4;"></div>
<div style="left:201px;top:402px;width:12px;height:12px;background:#dadada;"></div>
<div style="left:258px;top:402px;width:3px;height:12px;background:#d5d5d5;"></div>
<div style="left:261px;top:402px;width:12px;height:12px;background:#d6d6d6;"></div>
<div style="left:273px;top:402px;width:12px;height:12px;background:#d9d9d9;"></div>
<div style="left:285px;top:402px;width:12px;height:12px;background:#d7d7d7;"></div>
<div style="left:297px;top:402px;width:3px;height:12px;background:#d6d6d6;"></div>
<div style="left:75px;top:422px;width:30px;height:14px;background:#eaeaea;"></div>
<div style="left:12px;top:416px;width:28px;height:24px;background:#f3f3f3;border-radius:12px;"></div>
<div style="left:45px;top:416px;width:25px;height:24px;background:#f3f3f3;border-radius:12px;"></div>
<div style="left:75.5px;top:449.6px;width:25.3px;height:7.4px;background:#9dbdf0;"></div>
<div style="left:9px;top:498px;width:12px;height:12px;background:#f0f0f0;"></div>
<div style="left:21px;top:498px;width:12px;height:12px;background:#efefef;"></div>
<div style="left:33px;top:498px;width:12px;height:12px;background:#ebebeb;"></div>
<div style="left:45px;top:498px;width:12px;height:12px;background:#f1f1f1;"></div>
<div style="left:57px;top:498px;width:12px;height:12px;background:#efefef;"></div>
<div style="left:69px;top:498px;width:12px;height:12px;background:#ededed;"></div>
<div style="left:81px;top:498px;width:12px;height:12px;background:#f0f0f0;"></div>
<div style="left:93px;top:498px;width:12px;height:12px;background:#f1f1f1;"></div>
<div style="left:105px;top:498px;width:12px;height:12px;background:#ebebeb;"></div>
<div style="left:117px;top:498px;width:12px;height:12px;background:#f0f0f0;"></div>
<div style="left:129px;top:498px;width:12px;height:12px;background:#f1f1f1;"></div>
<div style="left:141px;top:498px;width:12px;height:12px;background:#ededed;"></div>
<div style="left:153px;top:498px;width:12px;height:12px;background:#efefef;"></div>
<div style="left:165px;top:498px;width:12px;height:12px;background:#ededed;"></div>
<div style="left:177px;top:498px;width:12px;height:12px;background:#ececec;"></div>
<div style="left:189px;top:498px;width:12px;height:12px;background:#ededed;"></div>
<div style="left:201px;top:498px;width:12px;height:12px;background:#f1f1f1;"></div>
<div style="left:213px;top:498px;width:12px;height:12px;background:#ececec;"></div>
<div style="left:225px;top:498px;width:12px;height:12px;background:#efefef;"></div>
<div style="left:237px;top:498px;width:12px;height:12px;background:#efefef;"></div>
<div style="left:249px;top:498px;width:12px;height:12px;background:#f1f1f1;"></div>
<div style="left:261px;top:498px;width:12px;height:12px;background:#efefef;"></div>
<div style="left:273px;top:498px;width:12px;height:12px;background:#ededed;"></div>
<div style="left:285px;top:498px;width:12px;height:12px;background:#f0f0f0;"></div>
<div style="left:297px;top:498px;width:12px;height:12px;background:#ececec;"></div>
<div style="left:309px;top:498px;width:12px;height:12px;background:#efefef;"></div>
<div style="left:0px;top:498px;width:9px;height:12px;background:#fffaee;"></div>
<div style="left:9px;top:510px;width:12px;height:12px;background:#dbdbdb;"></div>
<div style="left:21px;top:510px;width:12px;height:12px;background:#dbdbdb;"></div>
<div style="left:33px;top:510px;width:12px;height:12px;background:#dedede;"></div>
<div style="left:45px;top:510px;width:12px;height:12px;background:#dbdbdb;"></div>
<div style="left:57px;top:510px;width:12px;height:12px;background:#dbdbdb;"></div>
<div style="left:69px;top:510px;width:12px;height:12px;background:#e0e0e0;"></div>
<div style="left:81px;top:510px;width:12px;height:12px;background:#dfdfdf;"></div>
<div style="left:93px;top:510px;width:12px;height:12px;background:#dddddd;"></div>
<div style="left:105px;top:510px;width:12px;height:12px;background:#d8d8d8;"></div>
<div style="left:117px;top:510px;width:12px;height:12px;background:#d8d8d8;"></div>
<div style="left:129px;top:510px;width:12px;height:12px;background:#dcdcdc;"></div>
<div style="left:141px;top:510px;width:12px;height:12px;background:#dfdfdf;"></div>
<div style="left:153px;top:510px;width:12px;height:12px;background:#dcdcdc;"></div>
<div style="left:165px;top:510px;width:12px;height:12px;background:#dbdbdb;"></div>
<div style="left:177px;top:510px;width:12px;height:12px;background:#dddddd;"></div>
<div style="left:189px;top:510px;width:12px;height:12px;background:#dfdfdf;"></div>
<div style="left:201px;top:510px;width:12px;height:12px;background:#dddddd;"></div>
<div style="left:213px;top:510px;width:12px;height:12px;background:#dddddd;"></div>
<div style="left:225px;top:510px;width:12px;height:12px;background:#d9d9d9;"></div>
<div style="left:237px;top:510px;width:12px;height:12px;background:#dbdbdb;"></div>
<div style="left:249px;top:510px;width:12px;height:12px;background:#d9d9d9;"></div>
<div style="left:261px;top:510px;width:12px;height:12px;background:#dbdbdb;"></div>
<div style="left:273px;top:510px;width:12px;height:12px;background:#dfdfdf;"></div>
<div style="left:285px;top:510px;width:12px;height:12px;background:#dbdbdb;"></div>
<div style="left:297px;top:510px;width:12px;height:12px;background:#dddddd;"></div>
<div style="left:309px;top:510px;width:12px;height:12px;background:#dbdbdb;"></div>
<div style="left:0px;top:510px;width:9px;height:12px;background:#fcf1d2;"></div>
<div style="left:321px;top:505px;width:19px;height:17px;background:#f8f8f8;border-radius:0 8px 8px 0;"></div>
<div style="left:9px;top:582px;width:12px;height:12px;background:#eeeeee;"></div>
<div style="left:21px;top:582px;width:12px;height:12px;background:#efefef;"></div>
<div style="left:33px;top:582px;width:12px;height:12px;background:#efefef;"></div>
<div style="left:45px;top:582px;width:12px;height:12px;background:#f1f1f1;"></div>
<div style="left:57px;top:582px;width:12px;height:12px;background:#ebebeb;"></div>
<div style="left:69px;top:582px;width:12px;height:12px;background:#eeeeee;"></div>
<div style="left:81px;top:582px;width:12px;height:12px;background:#f0f0f0;"></div>
<div style="left:93px;top:582px;width:12px;height:12px;background:#ededed;"></div>
<div style="left:105px;top:582px;width:12px;height:12px;background:#f1f1f1;"></div>
<div style="left:117px;top:582px;width:12px;height:12px;background:#f0f0f0;"></div>
<div style="left:129px;top:582px;width:12px;height:12px;background:#ebebeb;"></div>
<div style="left:141px;top:582px;width:12px;height:12px;background:#f1f1f1;"></div>
<div style="left:153px;top:582px;width:12px;height:12px;background:#f0f0f0;"></div>
<div style="left:165px;top:582px;width:12px;height:12px;background:#ebebeb;"></div>
<div style="left:177px;top:582px;width:12px;height:12px;background:#eeeeee;"></div>
<div style="left:189px;top:582px;width:12px;height:12px;background:#f1f1f1;"></div>
<div style="left:201px;top:582px;width:12px;height:12px;background:#f0f0f0;"></div>
<div style="left:213px;top:582px;width:12px;height:12px;background:#f1f1f1;"></div>
<div style="left:225px;top:582px;width:12px;height:12px;background:#ececec;"></div>
<div style="left:237px;top:582px;width:12px;height:12px;background:#eeeeee;"></div>
<div style="left:249px;top:582px;width:12px;height:12px;background:#ececec;"></div>
<div style="left:261px;top:582px;width:12px;height:12px;background:#eeeeee;"></div>
<div style="left:273px;top:582px;width:12px;height:12px;background:#f1f1f1;"></div>
<div style="left:285px;top:582px;width:12px;height:12px;background:#f0f0f0;"></div>
<div style="left:297px;top:582px;width:12px;height:12px;background:#ededed;"></div>
<div style="left:309px;top:582px;width:6px;height:12px;background:#ebebeb;"></div>
<div style="left:0px;top:584px;width:9px;height:10px;background:#fffaee;"></div>
<div style="left:9px;top:594px;width:12px;height:12px;background:#e2e2e2;"></div>
<div style="left:21px;top:594px;width:12px;height:12px;background:#e3e3e3;"></div>
<div style="left:33px;top:594px;width:12px;height:12px;background:#e2e2e2;"></div>
<div style="left:45px;top:594px;width:12px;height:12px;background:#dddddd;"></div>
<div style="left:57px;top:594px;width:12px;height:12px;background:#dedede;"></div>
<div style="left:69px;top:594px;width:12px;height:12px;background:#dedede;"></div>
<div style="left:81px;top:594px;width:12px;height:12px;background:#dedede;"></div>
<div style="left:93px;top:594px;width:12px;height:12px;background:#dcdcdc;"></div>
<div style="left:105px;top:594px;width:12px;height:12px;background:#dedede;"></div>
<div style="left:117px;top:594px;width:12px;height:12px;background:#e3e3e3;"></div>
<div style="left:129px;top:594px;width:12px;height:12px;background:#dedede;"></div>
<div style="left:141px;top:594px;width:12px;height:12px;background:#e3e3e3;"></div>
<div style="left:153px;top:594px;width:12px;height:12px;background:#e1e1e1;"></div>
<div style="left:165px;top:594px;width:12px;height:12px;background:#dedede;"></div>
<div style="left:177px;top:594px;width:12px;height:12px;background:#e4e4e4;"></div>
<div style="left:189px;top:594px;width:12px;height:12px;background:#e4e4e4;"></div>
<div style="left:201px;top:594px;width:12px;height:12px;background:#dedede;"></div>
<div style="left:213px;top:594px;width:12px;height:12px;background:#dcdcdc;"></div>
<div style="left:225px;top:594px;width:12px;height:12px;background:#dcdcdc;"></div>
<div style="left:237px;top:594px;width:12px;height:12px;background:#dddddd;"></div>
<div style="left:249px;top:594px;width:12px;height:12px;background:#e4e4e4;"></div>
<div style="left:261px;top:594px;width:12px;height:12px;background:#dedede;"></div>
<div style="left:273px;top:594px;width:12px;height:12px;background:#e2e2e2;"></div>
<div style="left:285px;top:594px;width:12px;height:12px;background:#dfdfdf;"></div>
<div style="left:297px;top:594px;width:3px;height:12px;background:#dfdfdf;"></div>
<div style="left:0px;top:594px;width:9px;height:12px;background:#fcf1d2;"></div>
<div style="left:35px;top:606px;width:10px;height:12px;background:#d3d3d3;"></div>
<div style="left:45px;top:606px;width:12px;height:12px;background:#d7d7d7;"></div>
<div style="left:57px;top:606px;width:12px;height:12px;background:#d6d6d6;"></div>
<div style="left:69px;top:606px;width:12px;height:12px;background:#d7d7d7;"></div>
<div style="left:81px;top:606px;width:12px;height:12px;background:#dbdbdb;"></div>
<div style="left:93px;top:606px;width:12px;height:12px;background:#d6d6d6;"></div>
<div style="left:105px;top:606px;width:12px;height:12px;background:#d8d8d8;"></div>
<div style="left:117px;top:606px;width:12px;height:12px;background:#d7d7d7;"></div>
<div style="left:129px;top:606px;width:12px;height:12px;background:#dbdbdb;"></div>
<div style="left:141px;top:606px;width:12px;height:12px;background:#d9d9d9;"></div>
<div style="left:153px;top:606px;width:12px;height:12px;background:#d5d5d5;"></div>
<div style="left:165px;top:606px;width:12px;height:12px;background:#d3d3d3;"></div>
<div style="left:177px;top:606px;width:12px;height:12px;background:#d8d8d8;"></div>
<div style="left:189px;top:606px;width:12px;height:12px;background:#dadada;"></div>
<div style="left:201px;top:606px;width:12px;height:12px;background:#dbdbdb;"></div>
<div style="left:213px;top:606px;width:12px;height:12px;background:#d9d9d9;"></div>
<div style="left:225px;top:606px;width:12px;height:12px;background:#dbdbdb;"></div>
<div style="left:237px;top:606px;width:12px;height:12px;background:#d5d5d5;"></div>
<div style="left:249px;top:606px;width:12px;height:12px;background:#dbdbdb;"></div>
<div style="left:261px;top:606px;width:12px;height:12px;background:#d5d5d5;"></div>
<div style="left:273px;top:606px;width:12px;height:12px;background:#dbdbdb;"></div>
<div style="left:285px;top:606px;width:12px;height:12px;background:#dbdbdb;"></div>
<div style="left:297px;top:606px;width:12px;height:12px;background:#d3d3d3;"></div>
<div style="left:35px;top:618px;width:10px;height:12px;background:#ededed;"></div>
<div style="left:45px;top:618px;width:12px;height:12px;background:#ebebeb;"></div>
<div style="left:57px;top:618px;width:12px;height:12px;background:#eeeeee;"></div>
<div style="left:69px;top:618px;width:12px;height:12px;background:#eaeaea;"></div>
<div style="left:81px;top:618px;width:12px;height:12px;background:#ebebeb;"></div>
<div style="left:93px;top:618px;width:12px;height:12px;background:#ebebeb;"></div>
<div style="left:105px;top:618px;width:12px;height:12px;background:#ebebeb;"></div>
<div style="left:117px;top:618px;width:12px;height:12px;background:#ededed;"></div>
<div style="left:129px;top:618px;width:12px;height:12px;background:#eeeeee;"></div>
<div style="left:141px;top:618px;width:12px;height:12px;background:#eaeaea;"></div>
<div style="left:153px;top:618px;width:12px;height:12px;background:#eeeeee;"></div>
<div style="left:165px;top:618px;width:12px;height:12px;background:#eaeaea;"></div>
<div style="left:177px;top:618px;width:12px;height:12px;background:#ececec;"></div>
<div style="left:189px;top:618px;width:12px;height:12px;background:#eeeeee;"></div>
<div style="left:201px;top:618px;width:12px;height:12px;background:#eeeeee;"></div>
<div style="left:213px;top:618px;width:12px;height:12px;background:#eeeeee;"></div>
<div style="left:225px;top:618px;width:12px;height:12px;background:#ededed;"></div>
<div style="left:237px;top:618px;width:12px;height:12px;background:#eaeaea;"></div>
<div style="left:249px;top:618px;width:12px;height:12px;background:#eeeeee;"></div>
<div style="left:261px;top:618px;width:12px;height:12px;background:#eaeaea;"></div>
<div style="left:273px;top:618px;width:12px;height:12px;background:#ebebeb;"></div>
<div style="left:285px;top:618px;width:12px;height:12px;background:#ebebeb;"></div>
<div style="left:297px;top:618px;width:12px;height:12px;background:#ececec;"></div>
<div style="left:9px;top:630px;width:12px;height:12px;background:#d2d2d2;"></div>
<div style="left:21px;top:630px;width:12px;height:12px;background:#d3d3d3;"></div>
<div style="left:33px;top:630px;width:12px;height:12px;background:#dadada;"></div>
<div style="left:45px;top:630px;width:12px;height:12px;background:#d9d9d9;"></div>
<div style="left:57px;top:630px;width:12px;height:12px;background:#dadada;"></div>
<div style="left:69px;top:630px;width:12px;height:12px;background:#d2d2d2;"></div>
<div style="left:81px;top:630px;width:12px;height:12px;background:#d3d3d3;"></div>
<div style="left:93px;top:630px;width:12px;height:12px;background:#d9d9d9;"></div>
<div style="left:105px;top:630px;width:12px;height:12px;background:#d7d7d7;"></div>
<div style="left:117px;top:630px;width:12px;height:12px;background:#dadada;"></div>
<div style="left:129px;top:630px;width:12px;height:12px;background:#dadada;"></div>
<div style="left:141px;top:630px;width:12px;height:12px;background:#d5d5d5;"></div>
<div style="left:153px;top:630px;width:12px;height:12px;background:#d6d6d6;"></div>
<div style="left:165px;top:630px;width:12px;height:12px;background:#d9d9d9;"></div>
<div style="left:177px;top:630px;width:12px;height:12px;background:#dadada;"></div>
<div style="left:189px;top:630px;width:12px;height:12px;background:#dadada;"></div>
<div style="left:201px;top:630px;width:4px;height:12px;background:#d9d9d9;"></div>
<div style="left:255px;top:630px;width:6px;height:12px;background:#dddddd;"></div>
<div style="left:261px;top:630px;width:12px;height:12px;background:#dadada;"></div>
<div style="left:273px;top:630px;width:12px;height:12px;background:#dedede;"></div>
<div style="left:285px;top:630px;width:5px;height:12px;background:#dddddd;"></div>
<div style="left:0px;top:630px;width:9px;height:12px;background:#fcf1d2;"></div>
<div style="left:9px;top:642px;width:12px;height:13px;background:#f0f0f0;"></div>
<div style="left:21px;top:642px;width:12px;height:13px;background:#f2f2f2;"></div>
<div style="left:33px;top:642px;width:12px;height:13px;background:#efefef;"></div>
<div style="left:45px;top:642px;width:12px;height:13px;background:#f1f1f1;"></div>
<div style="left:57px;top:642px;width:12px;height:13px;background:#efefef;"></div>
<div style="left:69px;top:642px;width:12px;height:13px;background:#f1f1f1;"></div>
<div style="left:81px;top:642px;width:12px;height:13px;background:#eeeeee;"></div>
<div style="left:93px;top:642px;width:12px;height:13px;background:#f1f1f1;"></div>
<div style="left:105px;top:642px;width:12px;height:13px;background:#f1f1f1;"></div>
<div style="left:117px;top:642px;width:12px;height:13px;background:#f0f0f0;"></div>
<div style="left:129px;top:642px;width:12px;height:13px;background:#eeeeee;"></div>
<div style="left:141px;top:642px;width:12px;height:13px;background:#efefef;"></div>
<div style="left:153px;top:642px;width:12px;height:13px;background:#f1f1f1;"></div>
<div style="left:165px;top:642px;width:12px;height:13px;background:#eeeeee;"></div>
<div style="left:177px;top:642px;width:12px;height:13px;background:#efefef;"></div>
<div style="left:189px;top:642px;width:12px;height:13px;background:#f0f0f0;"></div>
<div style="left:201px;top:642px;width:12px;height:13px;background:#eeeeee;"></div>
<div style="left:213px;top:642px;width:12px;height:13px;background:#efefef;"></div>
<div style="left:225px;top:642px;width:12px;height:13px;background:#f0f0f0;"></div>
<div style="left:237px;top:642px;width:12px;height:13px;background:#efefef;"></div>
<div style="left:249px;top:642px;width:12px;height:13px;background:#f0f0f0;"></div>
<div style="left:261px;top:642px;width:12px;height:13px;background:#efefef;"></div>
<div style="left:273px;top:642px;width:12px;height:13px;background:#f1f1f1;"></div>
<div style="left:285px;top:642px;width:10px;height:13px;background:#efefef;"></div>
<div style="left:0px;top:642px;width:9px;height:13px;background:#fffaee;"></div>
<div style="left:13px;top:189px;width:32px;height:17px;background:#ebebeb;border-radius:14px 14px 4px 4px;"></div>
<!-- text2 -->
<div class="g">
<span style="left:11px;top:188.34px;font-size:12.3px;color:#262626;transform:scaleX(0.91);transform-origin:0 0;">a</span>
<span style="left:40.5px;top:188.34px;font-size:12.3px;color:#262626;letter-spacing:-0.05px;transform:scaleX(0.8583);transform-origin:0 0;">n.js</span>
<span style="left:68.0px;top:209.34px;font-size:12.3px;color:#262626;letter-spacing:-0.05px;transform:scaleX(0.9088);transform-origin:0 0;">v5.3.2_min.js</span>
<span style="left:21.5px;top:230.34px;font-size:12.3px;color:#262626;letter-spacing:-0.05px;transform:scaleX(0.9236);transform-origin:0 0;">pi</span>
<span style="left:218.5px;top:272.34px;font-size:12.3px;color:#262626;letter-spacing:-0.05px;transform:scaleX(0.8712);transform-origin:0 0;">d64</span>
<span style="left:217.5px;top:398.34px;font-size:12.3px;color:#262626;letter-spacing:-0.05px;transform:scaleX(0.8459);transform-origin:0 0;">__wmjso</span>
<span style="left:308.5px;top:398.34px;font-size:12.3px;color:#262626;letter-spacing:-0.05px;transform:scaleX(0.9892);transform-origin:0 0;">rec...</span>
<span style="left:10.5px;top:440.34px;font-size:12.3px;color:#262626;letter-spacing:-0.019px;">ip.js</span>
<span style="left:10.5px;top:482.34px;font-size:12.3px;color:#262626;letter-spacing:-0.019px;">ip.js</span>
<span style="left:10.5px;top:524.34px;font-size:12.3px;color:#262626;letter-spacing:-0.019px;">ip.js</span>
<span style="left:10.5px;top:545.34px;font-size:12.3px;color:#262626;letter-spacing:-0.019px;">ip.js</span>
<span style="left:10.5px;top:566.34px;font-size:12.3px;color:#262626;letter-spacing:-0.019px;">ip.js</span>
<span style="left:304.5px;top:587.34px;font-size:12.3px;color:#262626;letter-spacing:-0.05px;transform:scaleX(0.9453);transform-origin:0 0;">..21...</span>
<span style="left:10.5px;top:608.34px;font-size:12.3px;color:#262626;letter-spacing:-0.05px;transform:scaleX(0.9882);transform-origin:0 0;">colle</span>
<span style="left:311.5px;top:608.34px;font-size:12.3px;color:#262626;letter-spacing:-0.05px;transform:scaleX(0.9184);transform-origin:0 0;">21...</span>
<span style="left:204.5px;top:629.34px;font-size:12.3px;color:#262626;letter-spacing:-0.05px;transform:scaleX(0.9724);transform-origin:0 0;">ket.chncu</span>
<span style="left:289.5px;top:629.34px;font-size:12.3px;color:#262626;letter-spacing:-0.05px;transform:scaleX(0.9375);transform-origin:0 0;">2F...21...</span>
<div style="left:75.5px;top:457px;width:25.3px;height:11.5px;background:rgba(255,255,255,0.17);"></div>
</div>
<!-- pop -->
<div style="left:907px;top:4px;width:465px;height:675px;background:#fff;box-shadow:0 1px 5px rgba(0,0,0,0.35);border-radius:2px"></div>
<div class="pw"><div class="pi">
<div style="left:907px;top:4px;width:465px;height:671px;background:#fff;box-shadow:0 1px 5px rgba(0,0,0,0.35);border-radius:2px"></div>
<div style="left:1354px;top:5px;width:17px;height:650px;background:#f1f1f1;"></div>
<div style="left:1356px;top:22px;width:13px;height:209px;background:#c1c1c1;"></div>
<svg style="left:1357px;top:10px;" width="11" height="8" viewBox="0 0 11 8"><path d="M1.5 6 H9.5 L5.5 1.5 Z" fill="#a3a3a3"/></svg>
<!-- poptext -->
<span style="left:921.6px;top:14.93px;font-size:11.5px;color:#222;letter-spacing:-0.3px;font-family:'Liberation Mono',monospace;">_0x404d6c</span>
<span style="left:1195.8px;top:14.93px;font-size:11.5px;color:#222;letter-spacing:-0.3px;font-family:'Liberation Mono',monospace;">@</span>
<div style="left:1206.3px;top:13px;width:147.70000000000005px;height:18px;overflow:hidden;background:none"><span style="left:0;top:1.93px;font-family:'Liberation Mono',monospace;font-size:11.5px;letter-spacing:-0.3px;color:#1a73e8;text-decoration:underline">core.v2.21.4.min.js?v=20</span></div>
<span style="left:921.6px;top:34.93px;font-size:11.5px;color:#222;letter-spacing:-0.3px;font-family:'Liberation Mono',monospace;">api</span>
<span style="left:1195.8px;top:34.93px;font-size:11.5px;color:#222;letter-spacing:-0.3px;font-family:'Liberation Mono',monospace;">@</span>
<div style="left:1206.3px;top:33px;width:147.70000000000005px;height:18px;overflow:hidden;background:none"><span style="left:0;top:1.93px;font-family:'Liberation Mono',monospace;font-size:11.5px;letter-spacing:-0.3px;color:#1a73e8;text-decoration:underline">core.v2.21.4.min.js?v=20</span></div>
<span style="left:921.6px;top:54.93px;font-size:11.5px;color:#222;letter-spacing:-0.3px;font-family:'Liberation Mono',monospace;">load</span>
<span style="left:1195.8px;top:54.93px;font-size:11.5px;color:#222;letter-spacing:-0.3px;font-family:'Liberation Mono',monospace;">@</span>
<div style="left:1206.3px;top:53px;width:147.70000000000005px;height:18px;overflow:hidden;background:none"><span style="left:0;top:1.93px;font-family:'Liberation Mono',monospace;font-size:11.5px;letter-spacing:-0.3px;color:#1a73e8;text-decoration:underline">core.v2.21.4.min.js?v=20</span></div>
<span style="left:921.6px;top:74.93px;font-size:11.5px;color:#222;letter-spacing:-0.3px;font-family:'Liberation Mono',monospace;">_0x515083</span>
<span style="left:1195.8px;top:74.93px;font-size:11.5px;color:#222;letter-spacing:-0.3px;font-family:'Liberation Mono',monospace;">@</span>
<div style="left:1206.3px;top:73px;width:147.70000000000005px;height:18px;overflow:hidden;background:none"><span style="left:0;top:1.93px;font-family:'Liberation Mono',monospace;font-size:11.5px;letter-spacing:-0.3px;color:#1a73e8;text-decoration:underline">core.v2.21.4.min.js?v=20</span></div>
<span style="left:921.6px;top:94.93px;font-size:11.5px;color:#222;letter-spacing:-0.3px;font-family:'Liberation Mono',monospace;">_0xb2b91d</span>
<span style="left:1195.8px;top:94.93px;font-size:11.5px;color:#222;letter-spacing:-0.3px;font-family:'Liberation Mono',monospace;">@</span>
<div style="left:1206.3px;top:93px;width:147.70000000000005px;height:18px;overflow:hidden;background:none"><span style="left:0;top:1.93px;font-family:'Liberation Mono',monospace;font-size:11.5px;letter-spacing:-0.3px;color:#1a73e8;text-decoration:underline">core.v2.21.4.min.js?v=20</span></div>
<span style="left:921.6px;top:114.93px;font-size:11.5px;color:#222;letter-spacing:-0.3px;font-family:'Liberation Mono',monospace;">_0x5a5f89.&lt;computed&gt;._0x515083.&lt;computed&gt;</span>
<span style="left:1195.8px;top:114.93px;font-size:11.5px;color:#222;letter-spacing:-0.3px;font-family:'Liberation Mono',monospace;">@</span>
<div style="left:1206.3px;top:113px;width:147.70000000000005px;height:18px;overflow:hidden;background:none"><span style="left:0;top:1.93px;font-family:'Liberation Mono',monospace;font-size:11.5px;letter-spacing:-0.3px;color:#1a73e8;text-decoration:underline">core.v2.21.4.min.js?v=20</span></div>
<span style="left:921.6px;top:134.93px;font-size:11.5px;color:#222;letter-spacing:-0.3px;font-family:'Liberation Mono',monospace;">(anonymous)</span>
<span style="left:1195.8px;top:134.93px;font-size:11.5px;color:#222;letter-spacing:-0.3px;font-family:'Liberation Mono',monospace;">@</span>
<div style="left:1206.3px;top:133px;width:147.70000000000005px;height:18px;overflow:hidden;background:none"><span style="left:0;top:1.93px;font-family:'Liberation Mono',monospace;font-size:11.5px;letter-spacing:-0.3px;color:#1a73e8;text-decoration:underline">core.v2.21.4.min.js?v=20</span></div>
<span style="left:921.6px;top:154.93px;font-size:11.5px;color:#222;letter-spacing:-0.3px;font-family:'Liberation Mono',monospace;">(anonymous)</span>
<span style="left:1195.8px;top:154.93px;font-size:11.5px;color:#222;letter-spacing:-0.3px;font-family:'Liberation Mono',monospace;">@</span>
<div style="left:1206.3px;top:153px;width:147.70000000000005px;height:18px;overflow:hidden;background:none"><span style="left:0;top:1.93px;font-family:'Liberation Mono',monospace;font-size:11.5px;letter-spacing:-0.3px;color:#1a73e8;text-decoration:underline">core.v2.21.4.min.js?v=20</span></div>
<span style="left:921.6px;top:174.93px;font-size:11.5px;color:#222;letter-spacing:-0.3px;font-family:'Liberation Mono',monospace;">(anonymous)</span>
<span style="left:1195.8px;top:174.93px;font-size:11.5px;color:#222;letter-spacing:-0.3px;font-family:'Liberation Mono',monospace;">@</span>
<div style="left:1206.3px;top:173px;width:147.70000000000005px;height:18px;overflow:hidden;background:none"><span style="left:0;top:1.93px;font-family:'Liberation Mono',monospace;font-size:11.5px;letter-spacing:-0.3px;color:#1a73e8;text-decoration:underline">core.v2.21.4.min.js?v=20</span></div>
<span style="left:921.6px;top:194.93px;font-size:11.5px;color:#222;letter-spacing:-0.3px;font-family:'Liberation Mono',monospace;">(anonymous)</span>
<span style="left:1195.8px;top:194.93px;font-size:11.5px;color:#222;letter-spacing:-0.3px;font-family:'Liberation Mono',monospace;">@</span>
<div style="left:1206.3px;top:193px;width:147.70000000000005px;height:18px;overflow:hidden;background:none"><span style="left:0;top:1.93px;font-family:'Liberation Mono',monospace;font-size:11.5px;letter-spacing:-0.3px;color:#1a73e8;text-decoration:underline">core.v2.21.4.min.js?v=20</span></div>
<span style="left:920.7px;top:216.93px;font-size:11.5px;color:#222;letter-spacing:-0.3px;font-family:'Liberation Mono',monospace;font-style:italic;">setTimeout (async)</span>
<span style="left:921.6px;top:236.93px;font-size:11.5px;color:#222;letter-spacing:-0.3px;font-family:'Liberation Mono',monospace;">_0x11ec47</span>
<span style="left:1195.8px;top:236.93px;font-size:11.5px;color:#222;letter-spacing:-0.3px;font-family:'Liberation Mono',monospace;">@</span>
<div style="left:1206.3px;top:235px;width:147.70000000000005px;height:18px;overflow:hidden;background:none"><span style="left:0;top:1.93px;font-family:'Liberation Mono',monospace;font-size:11.5px;letter-spacing:-0.3px;color:#1a73e8;text-decoration:underline">core.v2.21.4.min.js?v=20</span></div>
<span style="left:921.6px;top:256.93px;font-size:11.5px;color:#222;letter-spacing:-0.3px;font-family:'Liberation Mono',monospace;">_emit</span>
<span style="left:1195.8px;top:256.93px;font-size:11.5px;color:#222;letter-spacing:-0.3px;font-family:'Liberation Mono',monospace;">@</span>
<div style="left:1206.3px;top:255px;width:147.70000000000005px;height:18px;overflow:hidden;background:none"><span style="left:0;top:1.93px;font-family:'Liberation Mono',monospace;font-size:11.5px;letter-spacing:-0.3px;color:#1a73e8;text-decoration:underline">core.v2.21.4.min.js?v=20</span></div>
<span style="left:921.6px;top:276.93px;font-size:11.5px;color:#222;letter-spacing:-0.3px;font-family:'Liberation Mono',monospace;">resolve</span>
<span style="left:1195.8px;top:276.93px;font-size:11.5px;color:#222;letter-spacing:-0.3px;font-family:'Liberation Mono',monospace;">@</span>
<div style="left:1206.3px;top:275px;width:147.70000000000005px;height:18px;overflow:hidden;background:none"><span style="left:0;top:1.93px;font-family:'Liberation Mono',monospace;font-size:11.5px;letter-spacing:-0.3px;color:#1a73e8;text-decoration:underline">core.v2.21.4.min.js?v=20</span></div>
<span style="left:921.6px;top:296.93px;font-size:11.5px;color:#222;letter-spacing:-0.3px;font-family:'Liberation Mono',monospace;">_0x5ea2e0.&lt;computed&gt;</span>
<span style="left:1195.8px;top:296.93px;font-size:11.5px;color:#222;letter-spacing:-0.3px;font-family:'Liberation Mono',monospace;">@</span>
<div style="left:1206.3px;top:295px;width:147.70000000000005px;height:18px;overflow:hidden;background:none"><span style="left:0;top:1.93px;font-family:'Liberation Mono',monospace;font-size:11.5px;letter-spacing:-0.3px;color:#1a73e8;text-decoration:underline">core.v2.21.4.min.js?v=20</span></div>
<span style="left:921.6px;top:316.93px;font-size:11.5px;color:#222;letter-spacing:-0.3px;font-family:'Liberation Mono',monospace;">_0x5a42e8</span>
<span style="left:1195.8px;top:316.93px;font-size:11.5px;color:#222;letter-spacing:-0.3px;font-family:'Liberation Mono',monospace;">@</span>
<div style="left:1206.3px;top:315px;width:147.70000000000005px;height:18px;overflow:hidden;background:none"><span style="left:0;top:1.93px;font-family:'Liberation Mono',monospace;font-size:11.5px;letter-spacing:-0.3px;color:#1a73e8;text-decoration:underline">core.v2.21.4.min.js?v=20</span></div>
<span style="left:921.6px;top:336.93px;font-size:11.5px;color:#222;letter-spacing:-0.3px;font-family:'Liberation Mono',monospace;">_0x540e53</span>
<span style="left:1195.8px;top:336.93px;font-size:11.5px;color:#222;letter-spacing:-0.3px;font-family:'Liberation Mono',monospace;">@</span>
<div style="left:1206.3px;top:335px;width:147.70000000000005px;height:18px;overflow:hidden;background:none"><span style="left:0;top:1.93px;font-family:'Liberation Mono',monospace;font-size:11.5px;letter-spacing:-0.3px;color:#1a73e8;text-decoration:underline">core.v2.21.4.min.js?v=20</span></div>
<span style="left:921.6px;top:356.93px;font-size:11.5px;color:#222;letter-spacing:-0.3px;font-family:'Liberation Mono',monospace;">(anonymous)</span>
<span style="left:1195.8px;top:356.93px;font-size:11.5px;color:#222;letter-spacing:-0.3px;font-family:'Liberation Mono',monospace;">@</span>
<div style="left:1206.3px;top:355px;width:147.70000000000005px;height:18px;overflow:hidden;background:none"><span style="left:0;top:1.93px;font-family:'Liberation Mono',monospace;font-size:11.5px;letter-spacing:-0.3px;color:#1a73e8;text-decoration:underline">core.v2.21.4.min.js?v=20</span></div>
<span style="left:920.7px;top:378.93px;font-size:11.5px;color:#222;letter-spacing:-0.3px;font-family:'Liberation Mono',monospace;font-style:italic;">setTimeout (async)</span>
<span style="left:921.6px;top:398.93px;font-size:11.5px;color:#222;letter-spacing:-0.3px;font-family:'Liberation Mono',monospace;">_0x22ef16</span>
<span style="left:1195.8px;top:398.93px;font-size:11.5px;color:#222;letter-spacing:-0.3px;font-family:'Liberation Mono',monospace;">@</span>
<div style="left:1206.3px;top:397px;width:147.70000000000005px;height:18px;overflow:hidden;background:none"><span style="left:0;top:1.93px;font-family:'Liberation Mono',monospace;font-size:11.5px;letter-spacing:-0.3px;color:#1a73e8;text-decoration:underline">core.v2.21.4.min.js?v=20</span></div>
<span style="left:921.6px;top:418.93px;font-size:11.5px;color:#222;letter-spacing:-0.3px;font-family:'Liberation Mono',monospace;">(anonymous)</span>
<span style="left:1195.8px;top:418.93px;font-size:11.5px;color:#222;letter-spacing:-0.3px;font-family:'Liberation Mono',monospace;">@</span>
<div style="left:1206.3px;top:417px;width:147.70000000000005px;height:18px;overflow:hidden;background:none"><span style="left:0;top:1.93px;font-family:'Liberation Mono',monospace;font-size:11.5px;letter-spacing:-0.3px;color:#1a73e8;text-decoration:underline">core.v2.21.4.min.js?v=20</span></div>
<span style="left:920.7px;top:440.93px;font-size:11.5px;color:#222;letter-spacing:-0.3px;font-family:'Liberation Mono',monospace;font-style:italic;">setTimeout (async)</span>
<span style="left:921.6px;top:460.93px;font-size:11.5px;color:#222;letter-spacing:-0.3px;font-family:'Liberation Mono',monospace;">_0x540e53</span>
<span style="left:1195.8px;top:460.93px;font-size:11.5px;color:#222;letter-spacing:-0.3px;font-family:'Liberation Mono',monospace;">@</span>
<div style="left:1206.3px;top:459px;width:147.70000000000005px;height:18px;overflow:hidden;background:none"><span style="left:0;top:1.93px;font-family:'Liberation Mono',monospace;font-size:11.5px;letter-spacing:-0.3px;color:#1a73e8;text-decoration:underline">core.v2.21.4.min.js?v=20</span></div>
<span style="left:921.6px;top:480.93px;font-size:11.5px;color:#222;letter-spacing:-0.3px;font-family:'Liberation Mono',monospace;">_0x22ef16</span>
<span style="left:1195.8px;top:480.93px;font-size:11.5px;color:#222;letter-spacing:-0.3px;font-family:'Liberation Mono',monospace;">@</span>
<div style="left:1206.3px;top:479px;width:147.70000000000005px;height:18px;overflow:hidden;background:none"><span style="left:0;top:1.93px;font-family:'Liberation Mono',monospace;font-size:11.5px;letter-spacing:-0.3px;color:#1a73e8;text-decoration:underline">core.v2.21.4.min.js?v=20</span></div>
<span style="left:921.6px;top:500.93px;font-size:11.5px;color:#222;letter-spacing:-0.3px;font-family:'Liberation Mono',monospace;">(anonymous)</span>
<span style="left:1195.8px;top:500.93px;font-size:11.5px;color:#222;letter-spacing:-0.3px;font-family:'Liberation Mono',monospace;">@</span>
<div style="left:1206.3px;top:499px;width:147.70000000000005px;height:18px;overflow:hidden;background:none"><span style="left:0;top:1.93px;font-family:'Liberation Mono',monospace;font-size:11.5px;letter-spacing:-0.3px;color:#1a73e8;text-decoration:underline">core.v2.21.4.min.js?v=20</span></div>
<span style="left:920.7px;top:522.93px;font-size:11.5px;color:#222;letter-spacing:-0.3px;font-family:'Liberation Mono',monospace;font-style:italic;">setTimeout (async)</span>
<span style="left:921.6px;top:542.93px;font-size:11.5px;color:#222;letter-spacing:-0.3px;font-family:'Liberation Mono',monospace;">_0x540e53</span>
<span style="left:1195.8px;top:542.93px;font-size:11.5px;color:#222;letter-spacing:-0.3px;font-family:'Liberation Mono',monospace;">@</span>
<div style="left:1206.3px;top:541px;width:147.70000000000005px;height:18px;overflow:hidden;background:none"><span style="left:0;top:1.93px;font-family:'Liberation Mono',monospace;font-size:11.5px;letter-spacing:-0.3px;color:#1a73e8;text-decoration:underline">core.v2.21.4.min.js?v=20</span></div>
<span style="left:921.6px;top:562.93px;font-size:11.5px;color:#222;letter-spacing:-0.3px;font-family:'Liberation Mono',monospace;">_0x22ef16</span>
<span style="left:921.6px;top:582.93px;font-size:11.5px;color:#222;letter-spacing:-0.3px;font-family:'Liberation Mono',monospace;">(anonymous)</span>
<span style="left:920.7px;top:604.93px;font-size:11.5px;color:#222;letter-spacing:-0.3px;font-family:'Liberation Mono',monospace;font-style:italic;">setTimeout (async)</span>
<span style="left:921.6px;top:624.93px;font-size:11.5px;color:#222;letter-spacing:-0.3px;font-family:'Liberation Mono',monospace;">_0x540e53</span>
<span style="left:921.6px;top:644.93px;font-size:11.5px;color:#222;letter-spacing:-0.3px;font-family:'Liberation Mono',monospace;">_0x22ef16</span>
</div></div>
<!-- top -->
<div style="left:1182px;top:152px;width:192px;height:16px;border:3px solid #f21d1d;border-radius:4px;background:none"></div>
<div style="left:1349px;top:557px;width:166px;height:98px;background:#fff;"></div>
<div style="left:1349px;top:557px;width:15px;height:98px;background:#f0f0f0;"></div>
<div style="left:1379px;top:557px;width:136px;height:33px;background:#f3f3f3;"></div>
<div style="left:1379px;top:606px;width:136px;height:16px;background:#f3f3f3;"></div>
<div style="left:1379px;top:639px;width:136px;height:16px;background:#f3f3f3;"></div>
<div style="left:1213px;top:622px;width:15px;height:17px;background:#fffff0;"></div>
<div style="left:1243px;top:622px;width:15px;height:17px;background:#e8b8e8;"></div>
<div style="left:1258px;top:622px;width:15px;height:17px;background:#e8fdff;"></div>
<div style="left:1273px;top:622px;width:15px;height:17px;background:#ffe8ec;"></div>
<div style="left:1288px;top:622px;width:15px;height:17px;background:#1a6fe8;"></div>
<div style="left:1303px;top:622px;width:15px;height:17px;background:#1a9fee;"></div>
<div style="left:1318px;top:622px;width:15px;height:17px;background:#fffff0;"></div>
<div style="left:1333px;top:622px;width:15px;height:17px;background:#f5f5f5;"></div>
<div style="left:1379px;top:622px;width:15px;height:17px;background:#ececec;"></div>
<div style="left:1424px;top:622px;width:15px;height:17px;background:#cfcfcf;"></div>
<div style="left:1485px;top:622px;width:15px;height:17px;background:#e4e4e4;"></div>
</div></body></html>
